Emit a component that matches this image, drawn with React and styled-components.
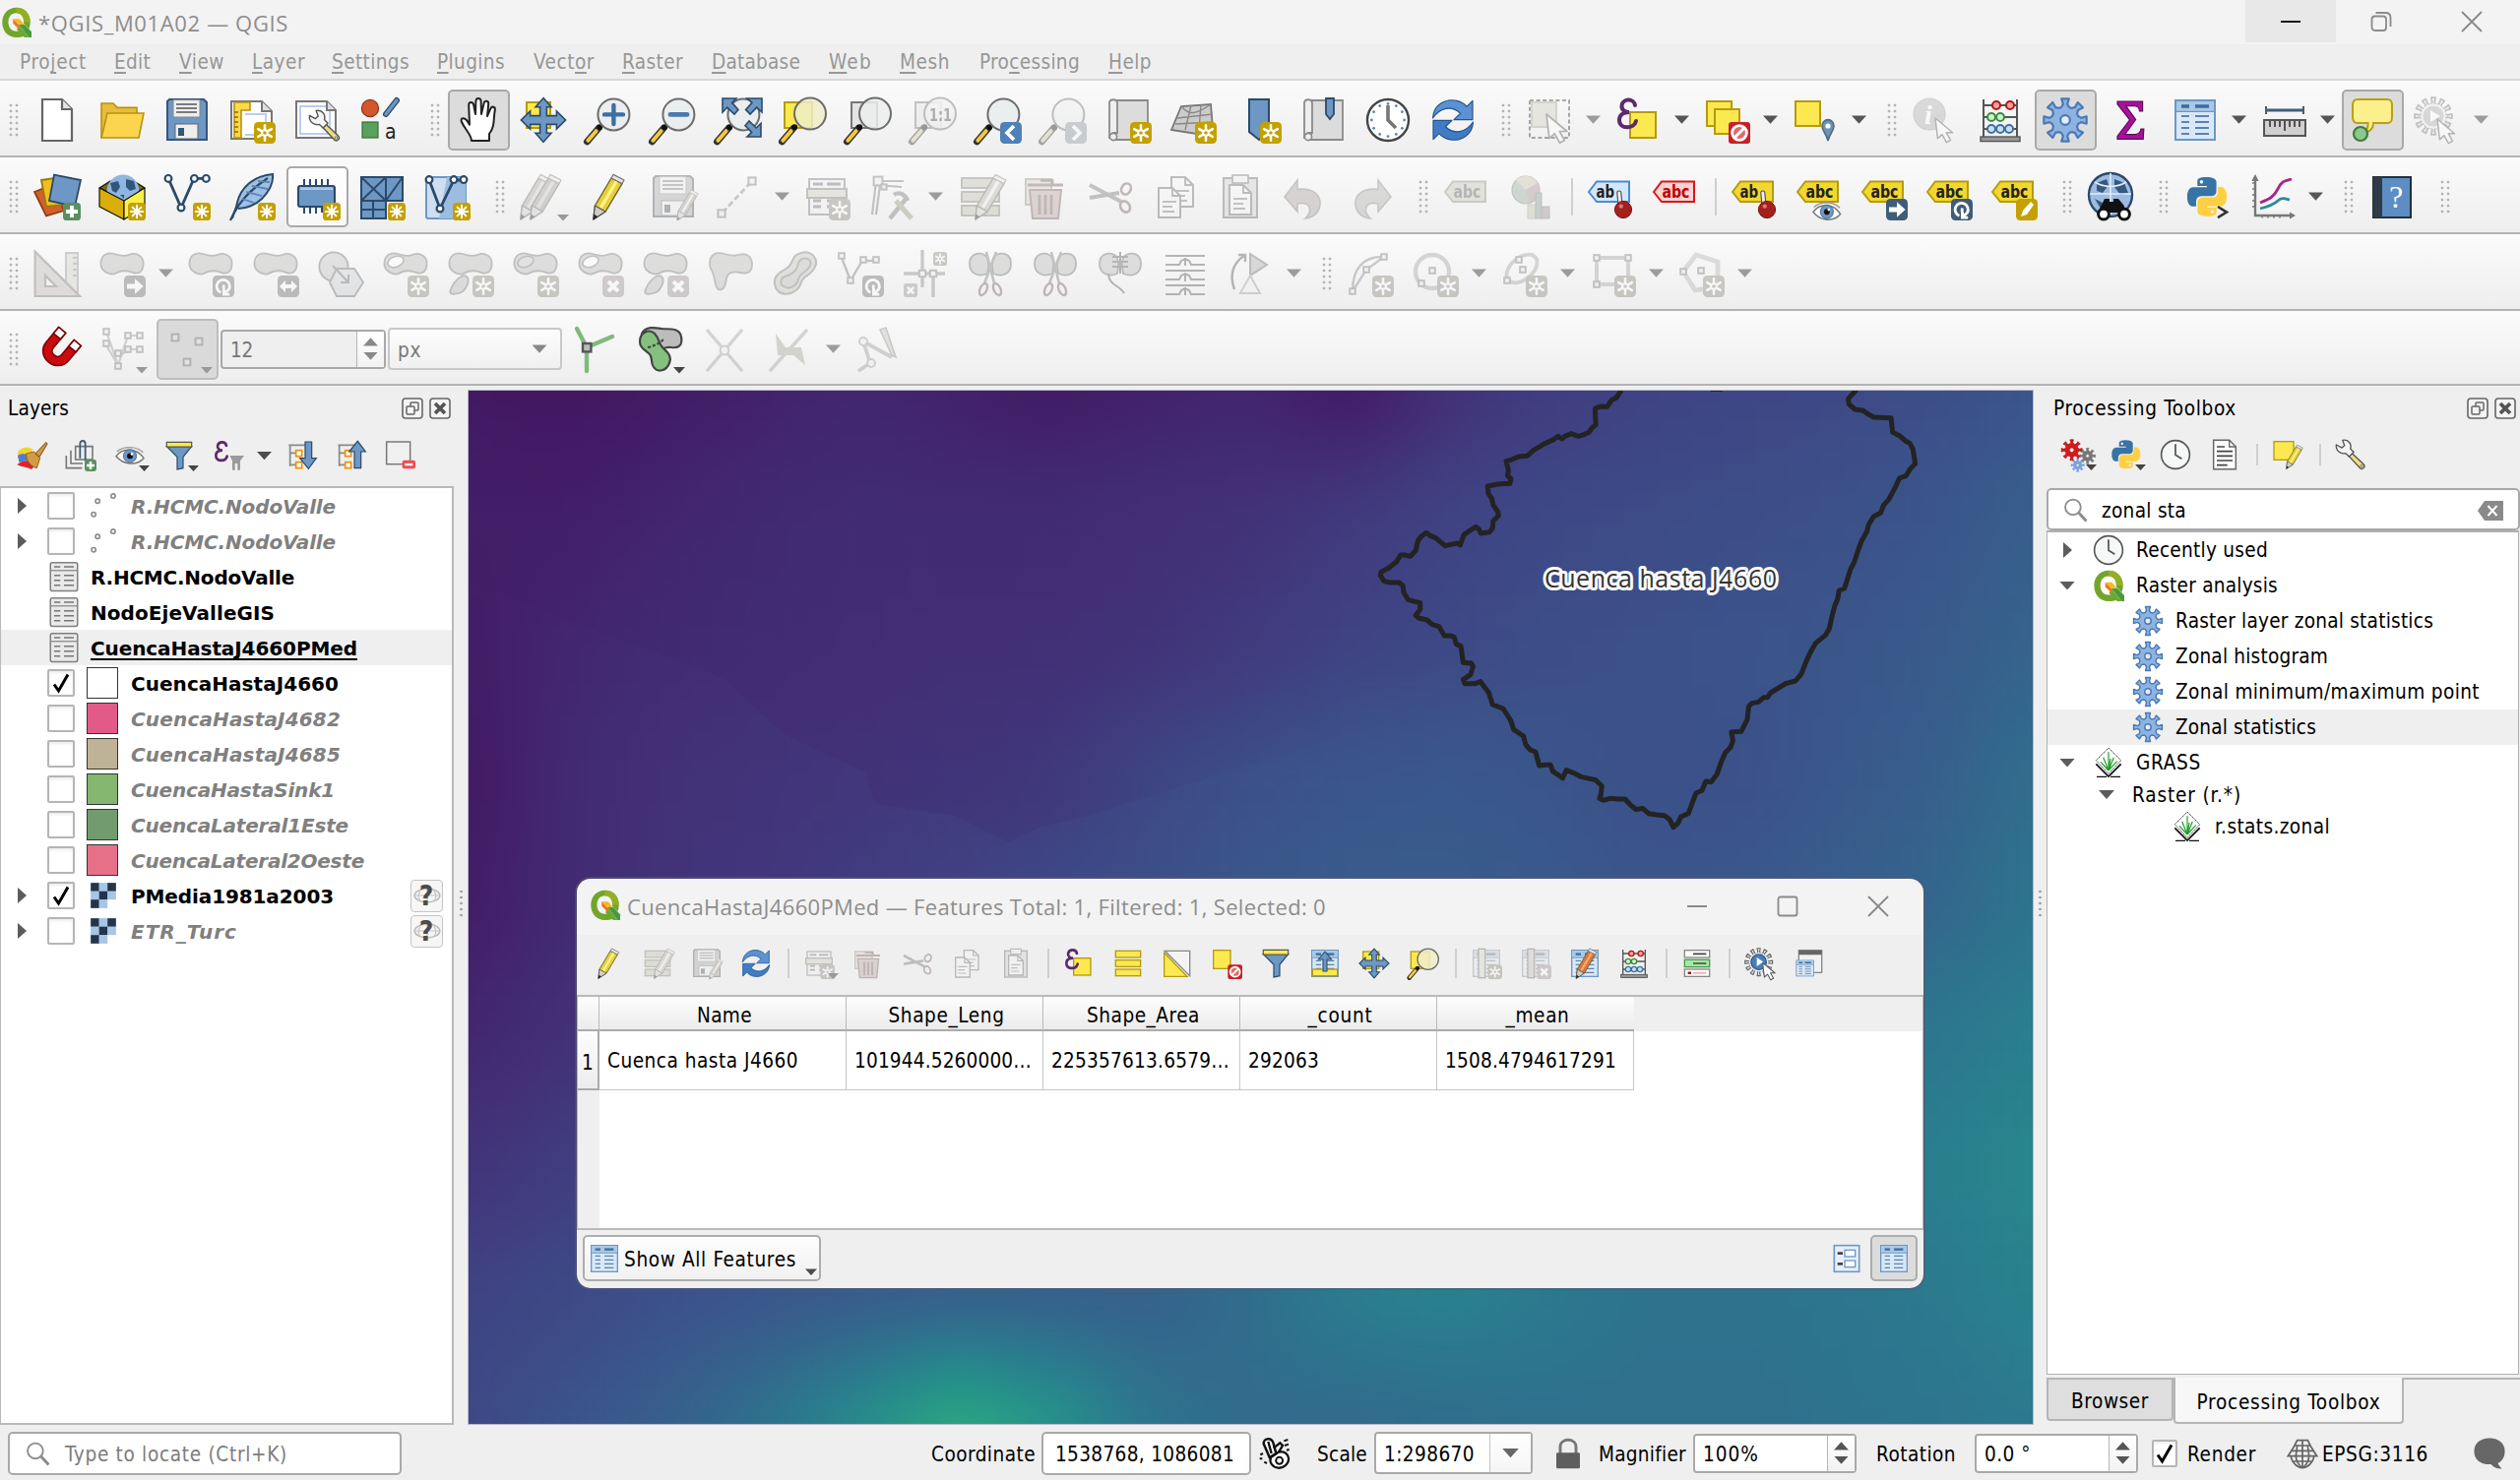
import React, { useLayoutEffect, useRef } from "react";
import styled, { createGlobalStyle, css } from "styled-components";

const UI = `"DejaVu Sans Condensed", "DejaVu Sans", "Noto Sans", sans-serif`;
const SEGOE = `"Open Sans", "Noto Sans", sans-serif`;

const GlobalStyle = createGlobalStyle`
  * { box-sizing: border-box; }
  html, body { margin: 0; padding: 0; }
  body { width: 2560px; height: 1504px; overflow: hidden; background: #efefef;
    font: 20.6px ${UI}; font-stretch: condensed; color: #000; }
`;

/* Text set to a known advance width by distributing letter spacing. */
const FitSpan = styled.span`
  display: inline-block;
  white-space: pre;
  flex: none;
  ${(p) => p.$u && css`text-decoration: underline; text-underline-offset: 3px; text-decoration-thickness: 2px; text-decoration-skip-ink: none;`}
`;
function Fit({ w, u, children }) {
  const ref = useRef(null);
  useLayoutEffect(() => {
    const el = ref.current;
    el.style.letterSpacing = "0px";
    const n = el.textContent.length;
    el.style.letterSpacing = (w - el.getBoundingClientRect().width) / n + "px";
  }, [w]);
  return <FitSpan ref={ref} $u={u}>{children}</FitSpan>;
}

/* ---------- icon parts ---------- */
const BL = "#6d97c4", BD = "#2b4a6b", YE = "#fce94f", YD = "#b59a12", GO = "#c4a000", DK = "#555753";

const star = (cx, cy, r, n, hub, c) => (
  <g stroke="#fff" strokeWidth={r * 0.32} strokeLinecap="round">
    {Array.from({ length: n }, (_, i) => {
      const a = (Math.PI * i) / n + Math.PI / 2;
      const dx = Math.cos(a) * r, dy = Math.sin(a) * r;
      return <path key={i} d={`M${cx - dx} ${cy - dy}L${cx + dx} ${cy + dy}`} />;
    })}
    {hub && <circle cx={cx} cy={cy} r={r * 0.36} fill={c} strokeWidth={r * 0.25} />}
  </g>
);
const B11 = ({ c = GO, x = 13, y = 13, children }) => (
  <g transform={`translate(${x} ${y})`}>
    <rect width="11" height="11" rx="2.2" fill={c} />
    {children || star(5.5, 5.5, 3.9, 3, true, c)}
  </g>
);
const B9 = ({ c = GO, children }) => (
  <g transform="translate(15 15)">
    <rect width="9" height="9" rx="1.8" fill={c} />
    {children || star(4.5, 4.5, 3.1, 4, false, c)}
  </g>
);
const arrowR = <path d="M1.5 4.3h4V1.6l4.3 3.9-4.3 3.9V6.7h-4z" fill="#fff" />;
const rotG = <path d="M4.2 8.600A3.300 3.300 0 1 1 8.300 7L6 9.300M5.600 4.800v1.500c0 1 .6 1.500.6 3.300M8.600 9.600H5.700V6.700" fill="none" stroke="#fff" strokeWidth="1.4" />;
const cross = <path d="M3 3l5 5M8 3l-5 5" stroke="#fff" strokeWidth="2" />;

const blobD = "M1.2 7C1.2 3 4 .8 8 2s5.500 1.200 8 .3 6.800.2 6.800 4.500-2.200 5.800-5.500 4.600-6-1-8.500.4S1.200 11 1.200 7z";
const Blob = () => <path d={blobD} fill="#b4bab0" stroke="#707070" strokeWidth=".9" />;
const Hole = ({ f = "#fff" }) => <ellipse cx="7" cy="6" rx="4.200" ry="2.600" transform="rotate(-20 7 6)" fill={f} stroke="#707070" strokeWidth=".8" />;
const Drop = () => <path d="M2 20C4 15 8 12 10 13.500S10 21 6 22 1 22 2 20z" fill="#b4bab0" stroke="#707070" strokeWidth=".9" />;
const Cursor = ({ x = 0, y = 0, s = 1 }) => (
  <path transform={`translate(${x} ${y}) scale(${s})`} d="M0 0l1.500 13 2.800-2.600 2.800 5 2.600-1.400L7 9.200h4z" fill="#fff" stroke="#555" strokeWidth=".9" strokeLinejoin="round" />
);
const Lens = ({ r = 8, cx = 14.7, cy = 9.2, f = "#e9ecec" }) => (
  <g>
    <path d="M1.200 23L7 16.200" stroke="#333" strokeWidth="3.400" strokeLinecap="round" />
    <path d="M1.700 22.400L5.800 17.600" stroke="#f3c93b" strokeWidth="2" strokeLinecap="round" />
    <circle cx="7.600" cy="15.600" r="1.500" fill="#111" />
    <circle cx={cx} cy={cy} r={r} fill={f} fillOpacity=".85" stroke="#6d6d6d" strokeWidth="1" />
  </g>
);
const pencil = (body = "#e6cf3a", lite = "#fdf38a") => (
  <g strokeLinejoin="round">
    <path d="M5.200 16.500L13.500 2.500 19 5.300 10.600 19.500 4.400 23.500z" fill={body} stroke="#6b6133" strokeWidth=".7" />
    <path d="M8.200 17.500L16.200 4" stroke={lite} strokeWidth="1.700" />
    <path d="M5.200 16.500l5.400 3L4.400 23.500z" fill="#cfcdc8" stroke="#555" strokeWidth=".6" />
    <path d="M4.800 20.800l1.800 1.300-2.300 1.500z" fill="#222" />
    <path d="M13.500 2.500L14.600.7 20 3.500 19 5.300z" fill="#e8e6e2" stroke="#777" strokeWidth=".6" />
  </g>
);
const floppy = (c = "#6d97c4") => (
  <g>
    <path d="M3 1.500h17.500l1.500 1.500v19H2V2.500z" fill={c} stroke="#34567a" strokeWidth="1" />
    <rect x="5" y="1.800" width="13.500" height="8.700" fill="#eee" stroke="#888" strokeWidth=".5" />
    <path d="M6.500 4h10.500M6.500 6h10.500M6.500 8h10.500" stroke="#555" strokeWidth=".8" />
    <rect x="6" y="14" width="11.500" height="7.500" fill="#eee" stroke="#666" strokeWidth=".5" />
    <rect x="7.500" y="16" width="3" height="4" fill="#34567a" />
  </g>
);
const table = (
  <g>
    <rect x="2" y="2" width="20" height="20" fill="#d9e8f6" stroke="#6d97c4" strokeWidth="1" />
    <rect x="2.500" y="2.500" width="19" height="5" fill="#a8c8e8" />
    <path d="M5 5h4M12 5h7" stroke="#3d6c9c" strokeWidth="1.800" />
    <path d="M2 7.700h20" stroke="#6d97c4" strokeWidth=".7" />
    <path d="M5 10h4M12 10h7M5 13h4M12 13h7M5 16h4M12 16h7M5 19h4M12 19h7" stroke="#5c84ad" strokeWidth="1" />
  </g>
);
const gearPath = (cx, cy, r, n) => {
  let d = "";
  for (let i = 0; i < n; i++) {
    const a = (2 * Math.PI * i) / n;
    [[-0.3, 0.62], [-0.13, 0.74], [-0.17, 1], [0.17, 1], [0.13, 0.74], [0.3, 0.62]].forEach(([o, k], j) => {
      const t = a + (o * 8) / n;
      d += `${i || j ? "L" : "M"}${(cx + Math.sin(t) * r * k).toFixed(2)} ${(cy - Math.cos(t) * r * k).toFixed(2)}`;
    });
  }
  return d + "z";
};
const Gear = ({ cx = 12, cy = 12, r = 11, n = 8, f = "#8db3e2", s = "#4b7ab5", w = 1.1, hub = "#fff" }) => (
  <g><path d={gearPath(cx, cy, r, n)} fill={f} stroke={s} strokeWidth={w} strokeLinejoin="round" />
    <circle cx={cx} cy={cy} r={r * 0.22} fill={hub} stroke={s} strokeWidth={w} /></g>
);
const Node = ({ x, y }) => <circle cx={x} cy={y} r="1.700" fill="#fff" stroke={BD} strokeWidth="1.100" />;
const Sq = ({ x, y, r = 1.400 }) => <rect x={x - r} y={y - r} width={2 * r} height={2 * r} fill="#eee" stroke="#777" strokeWidth="1" />;
const label = (t, f, s, tc = "#222") => (
  <g>
    <path d="M1 9.500L5 4.200h16.500v10.300H5z" fill={f} stroke={s} strokeWidth="1" />
    <text x={t === "ab" ? 4.800 : 5.200} y="12.500" fontSize="8.800" fontWeight="bold" fontFamily="DejaVu Sans Condensed" textLength={t === "ab" ? 9.300 : 14} lengthAdjust="spacingAndGlyphs" fill={tc}>{t}</text>
  </g>
);
const pin = <g><path d="M17 16l-.6-6" stroke="#555" strokeWidth="2.600" strokeLinecap="round" /><path d="M17 16l-.6-6" stroke="#eee" strokeWidth="1.400" strokeLinecap="round" /><circle cx="18.500" cy="18.500" r="4.300" fill="#a3201f" stroke="#771515" strokeWidth=".5" /><circle cx="17.400" cy="16.800" r="1.100" fill="#e57373" /></g>;
const arrows4 = (
  <path d="M12 .8l4 4.600h-2.300v4.400h5V7.500L23.300 12l-4.600 4.500v-2.300h-5v4.400H16L12 23.200 8 18.600h2.300v-4.400H5.300v2.300L.7 12l4.600-4.500v2.300h5V5.400H8z" fill={BL} stroke={BD} strokeWidth=".8" />
);
const python = (x = 0, y = 0, s = 1) => (
  <g transform={`translate(${x} ${y}) scale(${s})`}>
    <path fill="#3773a5" d="M14.25.18l.9.2.73.26.59.3.45.32.34.34.25.34.16.33.1.3.04.26.02.2-.01.13V8.500l-.05.63-.13.55-.21.46-.26.38-.3.31-.33.25-.35.19-.35.14-.33.1-.3.07-.26.04-.21.02H8.770l-.69.05-.59.14-.5.22-.41.27-.33.32-.27.35-.2.36-.15.37-.1.35-.07.32-.04.27-.02.21v3.060H3.170l-.21-.03-.28-.07-.32-.12-.35-.18-.36-.26-.36-.36-.35-.46-.32-.59-.28-.73-.21-.88-.14-1.050-.05-1.230.06-1.220.16-1.040.24-.87.32-.71.36-.57.4-.44.42-.33.42-.24.4-.16.36-.1.32-.05.24-.01h.16l.06.01h8.160v-.83H6.180l-.01-2.750-.02-.37.05-.34.11-.31.17-.28.25-.26.31-.23.38-.2.44-.18.51-.15.58-.12.64-.1.71-.06.77-.04.84-.02 1.270.05zm-6.300 1.980l-.23.33-.08.41.08.41.23.34.33.22.41.09.41-.09.33-.22.23-.34.08-.41-.08-.41-.23-.33-.33-.22-.41-.09-.41.09z" />
    <path fill="#ffcf42" d="M21.100 6.110l.28.06.32.12.35.18.36.27.36.35.35.47.32.59.28.73.21.88.14 1.040.05 1.230-.06 1.230-.16 1.040-.24.86-.32.71-.36.57-.4.45-.42.33-.42.24-.4.16-.36.09-.32.05-.24.02-.16-.01h-8.220v.82h5.840l.01 2.760.02.36-.05.34-.11.31-.17.29-.25.25-.31.24-.38.2-.44.17-.51.15-.58.13-.64.09-.71.07-.77.04-.84.01-1.270-.04-1.070-.14-.9-.2-.73-.25-.59-.3-.45-.33-.34-.34-.25-.34-.16-.33-.1-.3-.04-.25-.02-.2.01-.13v-5.340l.05-.64.13-.54.21-.46.26-.38.3-.32.33-.24.35-.2.35-.14.33-.1.3-.06.26-.04.21-.02.13-.01h5.840l.69-.05.59-.14.5-.21.41-.28.33-.32.27-.35.2-.36.15-.36.1-.35.07-.32.04-.28.02-.21V6.070h2.090l.14.01zm-6.470 14.250l-.23.33-.08.41.08.41.23.33.33.23.41.08.41-.08.33-.23.23-.33.08-.41-.08-.41-.23-.33-.33-.23-.41-.08-.41.08z" />
  </g>
);
const eye = (
  <g>
    <path d="M1.500 12.500C6 6 17 5.500 22.500 14 17 20 7 19 1.500 12.500z" fill="#fff" stroke="#777" strokeWidth="1.100" />
    <path d="M2 9C7 4.500 17 4.500 22 9.500" fill="none" stroke="#999" strokeWidth="1" />
    <circle cx="12" cy="12.300" r="5" fill="#6d97c4" stroke="#3b618d" strokeWidth=".6" /><circle cx="12" cy="12.300" r="2.200" fill="#111" /><circle cx="13.500" cy="10.800" r="1" fill="#fff" />
  </g>
);
const funnel = <g><path d="M2.500 5h19L15 13v8.500l-4.500 1V13z" fill={BL} stroke={BD} strokeWidth=".9" /><path d="M2.500 1.800h19v3.600h-19z" fill={YE} stroke={DK} strokeWidth=".9" /></g>;
const clock = (w = 1) => (
  <g><circle cx="12" cy="12" r="10.800" fill="#f6f7f7" stroke="#555" strokeWidth={w} /><path d="M12 4v8.200l4.800 3" fill="none" stroke="#555" strokeWidth="1.300" /></g>
);
const refresh = (
  <g stroke="#24548f" strokeWidth=".6" strokeLinejoin="round">
    <path d="M1.800 11C2 4.500 8 .8 14 2.200c2 .5 3.800 1.500 5 3L22 2.200v9.600h-9.500l3.300-3.200C11.500 4.500 5.500 5.500 1.800 11z" fill="#5c92d2" />
    <path d="M22.200 13C22 19.500 16 23.200 10 21.800c-2-.5-3.800-1.500-5-3L2 21.800v-9.600h9.500l-3.300 3.200c4.300 4.100 10.300 3.100 14-2.400z" fill="#3f7cc4" />
  </g>
);
const abacus = (
  <g>
    <path d="M3.500 1.500v19M20.500 1.500v19M3 4.500h18M3 10.500h18M3 16.500h18" stroke="#555" strokeWidth="1" />
    {[[10, 4.500], [17, 4.500]].map(([x, y]) => <circle key={x} cx={x} cy={y} r="2" fill="#f7a1a1" stroke="#b21616" strokeWidth="1" />)}
    {[[7.500, 10.500], [12, 10.500]].map(([x, y]) => <circle key={x} cx={x} cy={y} r="2" fill="#ccf2cc" stroke="#3f8a3f" strokeWidth="1" />)}
    {[[7.500, 16.500], [12, 16.500], [16.500, 16.500]].map(([x, y]) => <circle key={x} cx={x} cy={y} r="2" fill="#cbe0f5" stroke="#3f6f9f" strokeWidth="1" />)}
    <rect x="2" y="20.500" width="20" height="2.300" fill="#999" stroke="#555" strokeWidth=".7" />
  </g>
);
const rowsY = (c = YE, s = YD) => [2.500, 9.500, 16.500].map((y) => <rect key={y} x="2.500" y={y} width="19" height="5" fill={c} stroke={s} strokeWidth="1" />);
const scissors = (
  <g fill="none" stroke="#777" strokeWidth="1.300">
    <path d="M1.500 6l16 8.500M1.500 12.500l15-2.500" strokeWidth="2" />
    <ellipse cx="20" cy="8" rx="2.300" ry="2.900" transform="rotate(30 20 8)" stroke="#a05050" /><ellipse cx="19.500" cy="17" rx="2.300" ry="3" transform="rotate(-30 19.500 17)" stroke="#a05050" />
  </g>
);
const docL = (x, y) => <g transform={`translate(${x} ${y})`}><path d="M0 0h7l4 4v11H0z" fill="#f6f6f6" stroke="#666" strokeWidth="1" /><path d="M7 0v4h4" fill="none" stroke="#666" strokeWidth=".9" /><path d="M2 7h7M2 9.500h5M2 12h6" stroke="#777" strokeWidth=".9" /></g>;
const split = (
  <g><path d="M1.500 7C1.500 2 6 1 9 2.500c3 1.500 2 7 1.500 9.500C6 14 1.500 12 1.500 7zM22.500 7c0-5-4-6-7.500-4.500-3 1.500-2 7-1.500 9.500 5 2 9 0 9-5z" fill="#b4bab0" stroke="#666" strokeWidth=".9" />
    <path d="M10 1l4 16M15 1L9 17" stroke="#777" strokeWidth="1.300" /><ellipse cx="8.500" cy="20" rx="1.700" ry="3.200" transform="rotate(25 8.500 20)" fill="none" stroke="#a05050" strokeWidth="1.200" /><ellipse cx="15.500" cy="20" rx="1.700" ry="3.200" transform="rotate(-25 15.500 20)" fill="none" stroke="#a05050" strokeWidth="1.200" /></g>
);
const trash = <g><rect x="2" y="3" width="13" height="13" fill="#e0d0b0" stroke="#a09070" strokeWidth="1" /><path d="M4 8.500h16L18.500 23h-13z" fill="#df9a9a" stroke="#a05050" strokeWidth="1" /><path d="M3 6h18M9.500 3.700h6V6M9 11v10M12 11v10M15 11v10" stroke="#a05050" strokeWidth="1.400" fill="none" /></g>;
const scroll = <g><path d="M5 2h17v20H6z" fill="#dcdcdc" stroke="#8a8a8a" strokeWidth=".9" /><path d="M2.500 3.500C2.500 1 6.500 1 6.500 3.500v15H5c-1.500 0-2.500 1.500-2.500 3z" fill="#eee" stroke="#8a8a8a" strokeWidth=".9" /><circle cx="4.500" cy="20.500" r="1.800" fill="#eee" stroke="#8a8a8a" strokeWidth=".8" /></g>;
const epsilon = <path d="M10.500 4.500C10 1 4.500.8 3.800 4.500c-.4 2.300 1.700 3.500 3.700 3.500-3 0-5 1.300-5 4 0 4.800 7.500 4.800 8.500.5" fill="none" stroke="#5b2a6b" strokeWidth="2" strokeLinecap="round" />;
const noBadge = <g transform="translate(13 13)"><rect width="11" height="11" rx="1.500" fill="#c92026" /><circle cx="5.500" cy="5.500" r="3.700" fill="#dd6b6b" stroke="#fff" strokeWidth="1.400" /><path d="M3 8l5-5" stroke="#fff" strokeWidth="1.500" /></g>;
const treeStub = <g><path d="M2.500 4H20M3.500 4v16M3.500 10h5M3.500 19h5" stroke="#8a8a8a" strokeWidth="1.300" fill="none" /><rect x="8" y="8" width="4.500" height="4.500" fill="#fff" stroke="#f29100" strokeWidth="1.300" /><rect x="8" y="17" width="4.500" height="4.500" fill="#fff" stroke="#f29100" strokeWidth="1.300" /></g>;
const wrench = (
  <g strokeLinejoin="round">
    <path d="M12.500 10.500l9.500 9c1.500 2-1 4.300-2.800 2.800L10.500 13z" fill="#f0dc82" stroke="#555" strokeWidth="1" />
    <circle cx="20.300" cy="20.700" r=".9" fill="#fff" stroke="#555" strokeWidth=".6" />
    <path d="M1 4.500l4.300 2.300 2-1.800L5.800 1c4-.8 7.200 2.500 6 6.500l2.500 2.600-3.500 3.400-2.600-2.500C4.300 12 .5 9 1 4.500z" fill="#f4f4f4" stroke="#555" strokeWidth="1" />
  </g>
);

const I = {
  new: <g><path d="M4.500 1.500h10l5 5v16h-15z" fill="#fff" stroke="#666" strokeWidth="1.100" /><path d="M14.500 1.500v5h5" fill="#e4e4e4" stroke="#666" strokeWidth="1.100" /></g>,
  open: <g stroke="#b8930f" strokeWidth=".8"><path d="M1.500 21V3.500h6l2 2.200h10V10" fill="#e9bc3c" /><path d="M1.500 21L4.500 8.500h18.500l-2.500 12.500z" fill="#fcd54e" /></g>,
  save: floppy(),
  layout: <g><path d="M1.500 2.500H17l5 5v14H1.500z" fill="#fff" stroke="#777" /><path d="M3 3h8v4H6.500v14H3z" fill="#fcd94a" stroke="#b8930f" strokeWidth=".8" /><path d="M3 8h2M3 10.500h2M3 13h2M3 15.500h2M3 18h2" stroke="#8a6d00" strokeWidth=".7" /><path d="M8.500 9H19v10.500H8.500" fill="none" stroke="#b9cdf2" /><path d="M17 2.500v5h5" fill="#ddd" stroke="#777" /><B11 /></g>,
  layoutMgr: <g><path d="M1.500 2.500H17l4.500 4.500v14H1.500z" fill="#fff" stroke="#777" /><rect x="3.500" y="5" width="15" height="14" fill="none" stroke="#b9cdf2" /><path d="M17 2.500V7h4.500" fill="#ddd" stroke="#777" /><g transform="translate(7.500 6.500) scale(.7)">{wrench}</g></g>,
  style: <g><circle cx="6" cy="6" r="4.300" fill="#d2572c" stroke="#8f3515" strokeWidth=".6" /><path d="M14 9l5.500-7" stroke={BD} strokeWidth="3" strokeLinecap="round" /><path d="M14 9l5.500-7" stroke={BL} strokeWidth="1.700" strokeLinecap="round" /><rect x="2" y="13" width="8" height="8" fill="#5aa05c" stroke="#38703a" strokeWidth=".6" /><text x="13.500" y="21.500" fontSize="10.500" fontFamily="DejaVu Sans Condensed" fill="#222">a</text></g>,
  hand: <path d="M8.500 22.500c0-3-3.500-6-5-9.500-1-2.300 1.500-2.700 3-.3l1 1.600L7.100 4.500c-.1-2 2.200-2 2.500-.1L10.500 9 10.700 2.500c.1-2 2.500-2 2.600 0L13.500 9l1.300-5.500c.4-1.700 2.500-1.400 2.300.4L16.500 10l1.700-3.800c.7-1.500 2.500-.9 2.200.7C19.500 12 20.500 15 17.500 19v3.500z" fill="#fff" stroke="#222" strokeWidth="1" strokeLinejoin="round" />,
  panSel: <g><rect x="3.500" y="3" width="12" height="13" fill={YE} stroke={YD} />{arrows4}</g>,
  zoomIn: <g><Lens /><path d="M14.700 4.500v9.500M10 9.200h9.500" stroke="#3d6ea5" strokeWidth="2.200" strokeLinecap="round" /></g>,
  zoomOut: <g><Lens /><path d="M10.500 9.200h8.500" stroke="#4a7ab0" strokeWidth="2.400" strokeLinecap="round" /></g>,
  zoomFull: <g><Lens /><g fill={BL} stroke={BD} strokeWidth=".8"><path d="M4 1h7L8.800 3.200l3.200 3.500L10 9 6.400 5.600 4 8z" /><path d="M24 1h-7.500l2.500 2.200-3.200 3.500L18 9l3.400-3.400L24 8z" /><path d="M23.500 20.500h-7l2.300-2.300-3.300-3.400 2-2.300 3.600 3.500 2.400-2.300z" /></g></g>,
  zoomSel: <g><rect x="2.500" y="3" width="14" height="13" fill={YE} stroke={YD} /><Lens f="#efedc8" cx={15.500} cy={8.800} /></g>,
  zoomLayer: <g><rect x="3.500" y="3" width="13" height="13" fill="#e4e4e4" stroke="#777" /><Lens cx={15.500} cy={8.800} f="#eceeee" /></g>,
  zoomNative: <g><rect x="3" y="3" width="13" height="13" fill="#e4e4e4" stroke="#777" /><Lens cx={15.500} cy={8.800} /><text x="10" y="12.500" fontSize="9" fontWeight="bold" fontFamily="DejaVu Sans Condensed" textLength="11.500" lengthAdjust="spacingAndGlyphs" fill="#444">1:1</text></g>,
  zoomLast: <g><Lens /><B11 c="#4f80b8"><path d="M7 2L3.500 5.500 7 9" fill="none" stroke="#fff" strokeWidth="1.800" /></B11></g>,
  zoomNext: <g><Lens /><B11 c="#7f96ac"><path d="M4 2l3.500 3.500L4 9" fill="none" stroke="#fff" strokeWidth="1.800" /></B11></g>,
  newMap: <g>{scroll}<B11 /></g>,
  new3d: <g><path d="M1 17L6 5l15-1 1 12-8 3z" fill="#ccc" stroke="#777" strokeWidth=".9" /><path d="M4 11l18-2M3 14l19-1M11 4.500L8 17M16 4.300L15 17M6 5c4 5 8 4 15-1" stroke="#888" strokeWidth=".7" fill="none" /><B11 /></g>,
  bookNew: <g><path d="M7.500 1.500h10V18l-5 4-5-4z" fill={BL} stroke={BD} strokeWidth="1" /><B11 /></g>,
  bookShow: <g>{scroll}<path d="M13.500 1h4v8l-2 2.500-2-2.500z" fill={BL} stroke={BD} strokeWidth=".9" /></g>,
  temporal: <g><circle cx="12" cy="12" r="10.500" fill="#fff" stroke="#444" strokeWidth="1.200" />{Array.from({ length: 12 }, (_, i) => <circle key={i} cx={12 + 8.300 * Math.sin(i * 0.5236)} cy={12 - 8.300 * Math.cos(i * 0.5236)} r=".7" fill="#5b86b5" />)}<path d="M12 4.500V12l4 4" fill="none" stroke="#777" strokeWidth="1.800" /></g>,
  refresh,
  select: <g><rect x="2" y="2" width="20" height="19" fill="none" stroke="#333" strokeWidth="1" strokeDasharray="2 1.300" /><rect x="3" y="3" width="12.500" height="12.500" fill="#d5cfa0" stroke="#aaa27a" /><Cursor x={10.500} y={9} s={0.95} /></g>,
  selExpr: <g><rect x="8" y="8" width="13" height="13" fill={YE} stroke={YD} />{epsilon}</g>,
  deselect: <g><rect x="2" y="2.500" width="12.500" height="12.500" fill={YE} stroke={YD} /><rect x="6" y="6.500" width="12.500" height="12.500" fill={YE} stroke={YD} />{noBadge}</g>,
  selLoc: <g><rect x="2" y="2.500" width="12.500" height="12.500" fill={YE} stroke={YD} /><path d="M18.500 22.500c-1-4-3-5-3-7.500a3 3.200 0 0 1 6 0c0 2.500-2 3.500-3 7.500z" fill="#6f93b0" stroke="#4c6b85" strokeWidth=".8" /><circle cx="18.500" cy="15" r="1.300" fill="#fff" /></g>,
  identify: <g><circle cx="9" cy="9" r="8" fill="#a9afb4" stroke="#999" strokeWidth=".6" /><text x="6.500" y="14" fontSize="14" fontStyle="italic" fontWeight="bold" fontFamily="Liberation Serif" fill="#fff">i</text><Cursor x={12} y={11} s={0.8} /></g>,
  abacus,
  gear: <Gear hub="#e6ecf4" />,
  sigma: <path d="M5.500 2.500h12.800v5h-1.500c-.3-2-1-2.700-3-2.700h-4l5 7-5.500 7.500h5c2 0 2.800-.8 3.200-2.800h1.400l-.3 5.200H5.500v-1.500l6.300-8.300-6.300-8z" fill="#a8109c" stroke="#5c0a56" strokeWidth=".6" />,
  table,
  measure: <g><path d="M3 7h19" stroke="#3f5d7a" strokeWidth="1.600" /><path d="M3 5v4M22 5v4" stroke="#3f5d7a" strokeWidth="1" /><rect x="2" y="12" width="21" height="8" fill="#d0d0d0" stroke="#555" strokeWidth="1" /><path d="M5 12.500v3M7.500 12.500v3M10 12.500v3M12.500 12.500v5M15 12.500v3M17.500 12.500v3M20 12.500v3" stroke="#333" strokeWidth=".8" /></g>,
  tips: <g><path d="M10.500 12.500C11 15 9 17 6.500 18.500" fill="none" stroke="#c4a000" strokeWidth="1.300" /><path d="M4.500 1.500h15c2 0 2.500 1 2.500 3v6c0 2-.5 3-2.500 3h-7c0 2-1 4-4 5 1-2 1.500-3 1.300-5H4.500c-2 0-2.500-1-2.500-3v-6c0-2 .5-3 2.500-3z" fill="#fbf08d" stroke="#b8a010" strokeWidth="1" /><circle cx="6" cy="19" r="3.500" fill="#8bc88b" stroke="#3f7a3f" strokeWidth="1.100" /></g>,
  action: <g><Gear cx={10} cy={10} r={9.500} n={12} f="#f0f0f0" s="#777" w={0.9} hub="#fff" /><circle cx="10" cy="10" r="6.300" fill="#f0f0f0" /><circle cx="10" cy="10" r="5.300" fill="#a5acb4" /><path d="M8.500 7l5 3-5 3z" fill="#fff" /><Cursor x={12} y={11.500} s={0.8} /></g>,
  actionBlue: <g><Gear cx={11} cy={11} r={10.500} n={12} f="#ececec" s="#666" w={0.9} hub="#fff" /><circle cx="11" cy="11" r="7.300" fill="#ececec" /><circle cx="11" cy="11" r="5.800" fill="#4a7fb8" stroke="#2c5c90" /><path d="M9.500 7.500l5 3.400-5 3.400z" fill="#fff" /><Cursor x={14} y={11.500} s={0.85} /></g>,

  dsm: <g strokeWidth=".9"><path d="M.5 9.500l9-3.500 6 13-9 2.700z" fill="#d2602c" stroke="#8f3f15" /><path d="M4 3.500l10-1.500 2 14-9.500 1z" fill="#f0bf1c" stroke="#9a7a08" /><path d="M10.500.8L24 3.500 21 17 8 14z" fill={BL} stroke={BD} /><B9 c="#5a9060"><path d="M4.500 1.500v6M1.500 4.500h6" stroke="#fff" strokeWidth="1.900" /></B9></g>,
  gpkg: <g strokeLinejoin="round"><path d="M.5 7.500L6 4h12l5.500 3.500L13 13z" fill="#7a6a10" stroke="#111" strokeWidth=".6" /><circle cx="12.500" cy="9" r="8.200" fill="#8fb6e0" /><path d="M6 5l4-1 1 3-2 3-2-1zM14 3l4 1 1 4-3 1-2-2zM11 11l2 0 0 2z" fill="#33557c" /><path d="M.5 7.500L13 14v9.500L.5 17z" fill="#d9ae08" stroke="#111" strokeWidth=".6" /><path d="M23.500 7.500L13 14v9.500l10.500-6.500z" fill="#fbf04a" stroke="#111" strokeWidth=".6" /><B9 /></g>,
  shp: <g><path d="M2.500 2.700L9 17.500l6.500-14.800h6" fill="none" stroke={BD} strokeWidth="1.400" /><Node x={2.500} y={2.700} /><Node x={9} y={17.500} /><Node x={15.700} y={2.700} /><Node x={21.700} y={2.700} /><B9 /></g>,
  spatialite: <g><path d="M2 23c1-4 2-5 2.500-8C6 8 12 1.500 22.500.5 23 5 21 9 17 13c-3 3-8 5-12 5" fill="#9cc0e6" stroke={BD} strokeWidth="1" /><path d="M1 24C4 17 10 9 20 2.500" fill="none" stroke={BD} strokeWidth="1.100" /><path d="M9 9.500l8 2M12 6.500l8 1.500M7 13l6 2M15 4l6 .6" stroke="#5c84b0" strokeWidth=".9" /><B9 /></g>,
  mem: <g><path d="M5.500 3v4M8.500 3v4M11.500 3v4M14.500 3v4M17.500 3v4M5.500 17v3.500M8.500 17v3.500M11.500 17v3.500M14.500 17v3" stroke={BD} strokeWidth="1" /><rect x="2.500" y="6.500" width="18.500" height="10.500" rx="1" fill={BL} stroke={BD} strokeWidth="1" /><path d="M3.500 7.800h16.500" stroke="#a9c6e6" strokeWidth="1.300" /><B9 /></g>,
  mesh: <g fill={BL} stroke={BD} strokeWidth="1"><rect x="1.500" y="2" width="12.500" height="12" /><path d="M1.500 2L14 14M14 2L1.500 14" /><rect x="14" y="2" width="8.500" height="12" /><path d="M22.500 2L14 14" /><rect x="1.500" y="14" width="12.500" height="9" /><path d="M1.500 18.500H14M7.500 14v9" /><g stroke="none"><B9 /></g></g>,
  virtual: <g><rect x="1.500" y="2" width="20" height="21" rx="1" fill="#cfdff0" stroke={BL} strokeWidth="1" /><path d="M12 2h9.500v21H8z" fill="#9dbde0" /><path d="M3 3.500L8.500 18l7-14.500h5" fill="none" stroke={BD} strokeWidth="1.400" /><Node x={3} y={3.300} /><Node x={8.500} y={18} /><Node x={15.500} y={3.300} /><Node x={20.500} y={3.300} /><B9 /></g>,

  edits: <g><g transform="translate(-4 0)">{pencil("#b89f92", "#d8ccc6")}</g><g transform="translate(1 0)">{pencil("#a89890", "#d0c6c0")}</g></g>,
  pencil: pencil(),
  saveEdits: <g>{floppy("#a9a9a9")}<g transform="translate(11 8) scale(.68)">{pencil("#c09a80", "#eee")}</g></g>,
  digitize: <g><path d="M4 20L19 4" stroke="#888" strokeWidth="1.400" strokeDasharray="3 1.500" /><Sq x={3.500} y={20.500} r={1.800} /><Sq x={19} y={4} r={1.800} /></g>,
  addRow: <g><rect x="3" y="3" width="18" height="18" fill="#f0f0f0" stroke="#777" /><path d="M5 5.500h5M12 5.500h7M5 14h4M12 14h7M5 17h4M12 17h7" stroke="#667" strokeWidth="1.400" /><rect x="2" y="8" width="20" height="4.500" fill="#d6ce9c" stroke="#777" /><B11 c="#8f875f" /></g>,
  vertex: <g><path d="M4 4l14 0M4 6l13 1M4 4L2 21M6 6L4 21" stroke="#777" strokeWidth="1.100" /><Sq x={5} y={4} r={2.200} /><Sq x={8} y={7} r={1.300} /><path d="M11 23l9-11M13 11c3-2 6 0 7 3" stroke="#777" strokeWidth="2.200" fill="none" /><path d="M14 14l8 9" stroke="#a09850" strokeWidth="2.600" /></g>,
  modAttr: <g>{rowsY("#c6c092", "#868158")}<g transform="translate(5 0)">{pencil("#c6ae9c", "#eee")}</g></g>,
  trash, scissors,
  copy: <g>{docL(10, 2)}{docL(3.500, 7.500)}</g>,
  paste: <g><rect x="3.500" y="2.500" width="17" height="20" fill="#d0d0c6" stroke="#666" /><rect x="8" y="1" width="8" height="4" fill="#eee" stroke="#666" strokeWidth=".8" />{docL(6.500, 6)}</g>,
  undo: <path d="M1.500 12L8 3.500v4.700c8-1 12 3 11.500 8-.6 4-3.500 6.300-7.500 6.800 3.500-3 3.500-9-4-7.500v4z" fill="#bd9c96" stroke="#8c7a78" strokeWidth=".8" />,
  redo: <path d="M22.500 12L16 3.500v4.700c-8-1-12 3-11.500 8 .6 4 3.500 6.300 7.500 6.800-3.500-3-3.500-9 4-7.500v4z" fill="#a8b6a4" stroke="#7b887a" strokeWidth=".8" />,
  lblDis: label("abc", "#cbc59c", "#8f8a66", "#555"),
  diagram: <g><circle cx="9" cy="8.500" r="7" fill="#7cb48a" stroke="#777" strokeWidth=".6" /><path d="M9 8.500L4 3.500A7 7 0 0 1 15 5z" fill="#cfc470" /><path d="M9 8.500L15 5a7 7 0 0 1-4 10z" fill="#d48080" /><rect x="10" y="16" width="4" height="7" fill="#cfc470" stroke="#999" strokeWidth=".5" /><rect x="14" y="10" width="3" height="13" fill="#70a490" stroke="#777" strokeWidth=".5" /><rect x="17" y="17" width="4" height="6" fill="#b88" stroke="#777" strokeWidth=".5" /></g>,
  lblPin: <g>{label("ab", "#d3e7fc", "#4a8bd0")}{pin}</g>,
  lblRed: label("abc", "#fbd2d2", "#d41818", "#c00000"),
  lblYPin: <g>{label("ab", "#f2d82e", "#b59a12")}{pin}</g>,
  lblEye: <g>{label("abc", "#f2d82e", "#b59a12")}<g transform="translate(8 11) scale(.66 .7)">{eye}</g></g>,
  lblMove: <g>{label("abc", "#f2d82e", "#b59a12")}<B11 c="#3f5d78">{arrowR}</B11></g>,
  lblRot: <g>{label("abc", "#f2d82e", "#b59a12")}<B11 c="#3f5d78">{rotG}</B11></g>,
  lblEdit: <g>{label("abc", "#f2d82e", "#b59a12")}<B11 c={GO}><path d="M2.500 9l1-3 4-4.500 1.500 1.500L5.500 8z" fill="#fff" /></B11></g>,
  metasearch: <g><circle cx="12" cy="11" r="11" fill="#9cbbe0" stroke={BD} strokeWidth="1.200" /><path d="M5 5l5-2 1 3-3 4-3-1zM14 3l5 2 2 5-4 1-3-4zM4 13l4 2-1 3z" fill="#35587f" /><path d="M1.500 10.500h21M12 0v21M4 4.500c5 3 11 3 16 0" stroke="#e0ecf8" strokeWidth=".8" fill="none" /><path d="M9 13h2.500v1.500h2V13H16l2.500 3 2 4H5.500l2-4z" fill="#111" /><circle cx="8.500" cy="20.800" r="2.700" fill="#fff" stroke="#111" strokeWidth="1.500" /><circle cx="19" cy="20.800" r="2.700" fill="#fff" stroke="#111" strokeWidth="1.500" /></g>,
  python: <g>{python(2, 2, 0.83)}<path d="M17.500 17l4.500 2.800-4.500 2.800" fill="none" stroke="#333" strokeWidth="1.300" /></g>,
  chart: <g><path d="M6 3l15 0v16H6z" fill="#f7f7f7" /><path d="M3.500 2v19.500H22" stroke="#777" strokeWidth="1.200" fill="none" /><path d="M1.700 4l1.800-3.500L5.300 4zM21 19.700l3 1.800-3 1.800z" fill="#777" /><path d="M6 15c5-2 7-3 9-7s3-4 7-5" stroke="#a8258f" strokeWidth="1.400" fill="none" /><path d="M6 18c4-1 7-2 9-4s4-1 6-.5" stroke="#2a8c96" strokeWidth="1.400" fill="none" /><path d="M2 5h1.500M2 8h1.500M2 11h1.500M2 14h1.500M2 17h1.500M7 21.500v1.300M10 21.500v1.300M13 21.500v1.300M16 21.500v1.300" stroke="#777" strokeWidth=".8" /></g>,
  help: <g><rect x="2.500" y="2" width="19" height="20.500" fill="#5d8dc2" stroke="#222f3c" strokeWidth="1" /><rect x="2.500" y="2" width="4.500" height="20.500" fill="#2e3b48" /><text x="10.500" y="17.500" fontSize="16" fontFamily="Liberation Serif" fill="#fff">?</text></g>,

  cad: <g strokeWidth=".9"><rect x="16.500" y="1.500" width="6" height="20" fill="#d6d2b0" stroke="#888" /><path d="M20 4h2M20 7h2M20 10h2M20 13h2" stroke="#888" /><path fillRule="evenodd" d="M.8.800l22.700 22.700H.8zM6 13v5.500h5.500z" fill="#ccb8ac" stroke="#7b7370" strokeWidth="1.100" /></g>,
  fMove: <g><Blob /><B11 c="#6a6a6a">{arrowR}</B11></g>,
  fRot: <g><Blob /><B11 c="#6a6a6a">{rotG}</B11></g>,
  fScale: <g><Blob /><B11 c="#6a6a6a"><path d="M1 5.500L4 2.500v2h3v-2l3 3-3 3v-2H4v2z" fill="#fff" /></B11></g>,
  simplify: <g fill="#bcc2be" stroke="#666" strokeWidth=".9"><circle cx="8.500" cy="8.500" r="7.300" /><path d="M10 9.500h9l4.500 7-4.500 7h-9l-3.500-7z" fill="#c6d0da" /><path d="M8 8l8 8.500M16 12.500v4h-4" fill="none" strokeWidth="1" /></g>,
  addRing: <g><Blob /><Hole /><B11 c="#8f875f" /></g>,
  addPart: <g><Blob /><Drop /><B11 c="#8f875f" /></g>,
  fillRing: <g><Blob /><Hole f="#c0c6bc" /><B11 c="#8f875f" /></g>,
  delRing: <g><Blob /><Hole /><B11 c="#b0888e">{cross}</B11></g>,
  delPart: <g><Blob /><Drop /><B11 c="#b0888e">{cross}</B11></g>,
  reshape: <path d="M1.500 7C1.500 2 5 .8 9 2s5 1 8 .3 6 1 6 5-2.500 5-6 4.200-6.500 0-7 3-1 5.500-3.200 5.700S4.500 17 3.500 13 1.500 10 1.500 7z" fill="#b8bea8" stroke="#777" strokeWidth=".9" />,
  offset: <g stroke="#777" strokeWidth="1"><path d="M15 1.500c5-1.500 9 3 7 7-2 5-6 4-7 8s-6 7-10 5.500S.5 15 3 12.500s5.500-2.500 7-6 2-4.200 5-5z" fill="#c8c4a0" /><path d="M15.500 4.500c3-1 5 1 4 3.500-2 4-5 3-6 7s-5 5-7.500 3.500-1-4.500.5-5 4.500-1 6-4S13.500 5 15.500 4.500z" fill="#b4bcb0" /></g>,
  rotV: <g><path d="M2.500 4L7 15.500 13 5.500h7" fill="none" stroke="#777" strokeWidth="1.200" /><Sq x={2.500} y={3} /><Sq x={7} y={15.500} /><Sq x={13.500} y={5} /><Sq x={20} y={5} /><B11 c="#6a6a6a">{rotG}</B11></g>,
  trim: <g stroke="#888" strokeWidth="1.700"><path d="M10.500 0v11M1 12h21M10.500 13v6M16 13v11" /><Sq x={10.500} y={12} r={1.600} /><Sq x={16} y={12} r={1.600} /><g stroke="none"><g transform="translate(16 1) scale(.64)"><B11 x={0} y={0} c="#8f875f" /></g><g transform="translate(1 17) scale(.64)"><B11 x={0} y={0} c="#b0888e">{cross}</B11></g></g></g>,
  split, splitP: split,
  mergeF: <g><path d="M1.500 7C1.500 2 6 1 9 2.500c3 1.500 2 7 1.500 9.500C6 14 1.500 12 1.500 7zM22.500 7c0-5-4-6-7.500-4.500-3 1.500-2 7-1.500 9.500 5 2 9 0 9-5z" fill="#b4bab0" stroke="#666" strokeWidth=".9" /><path d="M8 3.500h8M8 6h8M8 8.500h8M6 12c0 6 6 6 8 10M12 1v11" stroke="#555" strokeWidth="1" fill="none" /></g>,
  mergeA: <path d="M2 3h20M2 7.500h7l1-2 2-1 2 1 1 2h7M2 10.500h20M2 15h7l1-2 2-1 2 1 1 2h7M2 18h20M2 22.500h7l1-2 2-1 2 1 1 2h7M12 4v4M12 12v4M12 19v4" stroke="#555" strokeWidth="1" fill="none" />,
  rotSym: <g><path d="M4 20C1 12 4 6 9 3M6 2.500h3.500v3.500" fill="none" stroke="#555" strokeWidth="1.200" /><path d="M12 2l8.500 5.500L12 13z" fill="#a8ada8" stroke="#666" /><path d="M12 13l5 9H7z" fill="#f0f0f0" stroke="#999" /></g>,
  arc: <g><path d="M3 21C3 10 8 3 19 3.500M3 21L10 10 19 3.500" fill="none" stroke="#888" strokeWidth="1.200" /><Sq x={3} y={21} /><Sq x={10} y={10} /><Sq x={19} y={3.500} /><B11 c="#8f875f" /></g>,
  circle: <g><circle cx="10.500" cy="11" r="8.500" fill="none" stroke="#9ea49a" strokeWidth="2.200" /><Sq x={10.500} y={10.500} /><Sq x={5} y={17} /><B11 c="#8f875f" /></g>,
  ellipse: <g><ellipse cx="11" cy="9.500" rx="9" ry="5.500" transform="rotate(-40 11 9.500)" fill="none" stroke="#9ea49a" strokeWidth="1.900" /><Sq x={9.500} y={5} /><Sq x={11.500} y={10} /><Sq x={3.500} y={15.500} /><B11 c="#8f875f" /></g>,
  rect: <g><rect x="4" y="4" width="16" height="13.500" fill="none" stroke="#9ea49a" strokeWidth="2" /><Sq x={4} y={4} /><Sq x={20} y={4} /><Sq x={4} y={17.500} /><B11 c="#8f875f" /></g>,
  poly: <g><path d="M3 11L9.500 2.500l11 3.500v13L9 20.500z" fill="none" stroke="#aeb4aa" strokeWidth="2.400" /><Sq x={3} y={11} /><Sq x={12} y={10.500} /><B11 c="#8f875f" /></g>,

  magnet: <g transform="translate(1 1.500) rotate(40 12 12) scale(.92)"><path d="M4 3h5v10c0 4 6 4 6 0V3h5v10c0 10.500-16 10.500-16 0z" fill="#cc0a12" stroke="#7c0000" strokeWidth=".9" /><path d="M4 2.500h5V7H4zM15 2.500h5V7h-5z" fill="#fff" stroke="#7c0000" strokeWidth=".9" /></g>,
  snapLyr: <g><path d="M4 3l6 17M4 10l6 10M10 20l5-15h6M11 15l5-3h5" fill="none" stroke="#999" strokeWidth="1.100" /><Sq x={4} y={3} /><Sq x={4} y={9} /><Sq x={10} y={20.500} /><Sq x={15} y={5} /><Sq x={21} y={5} /><Sq x={15} y={12} /><Sq x={21} y={12} /><Sq x={10} y={14} /></g>,
  snapVert: <g><Sq x={6} y={6} r={1.700} /><Sq x={18} y={8} r={1.700} /><Sq x={12} y={18.500} r={1.700} /></g>,
  topo: <g stroke="#7dbb7d" strokeWidth="2.200" strokeLinecap="round"><path d="M3 1.500l5 9.500v12M8 11l13-5.500" fill="none" /><rect x="6" y="9" width="4.200" height="4.200" fill="#bbb" stroke="#555" strokeWidth="1.200" /></g>,
  overlap: <g stroke="#444" strokeWidth="1.100"><path d="M3 4C5 0 10 1 13 1.500s9-1 10 4-2 6-5 5.500-5 .5-7 3z" fill="#bcbcbc" /><path d="M2 8C2 3 7 1.500 9.500 4s2 5 4 7 5 4 3.500 8-6 5-8 2 0-5-2.500-7S2 11 2 8z" fill="#84c17f" /><path d="M6 11c4-1 6-2 8-4" strokeDasharray="1.500 1" fill="none" /></g>,
  inter: <g><path d="M3 2l18 21M21 2L3 23" stroke="#a0a0a0" strokeWidth="1.700" /><circle cx="12" cy="12.500" r="2.200" fill="#eee" stroke="#999" /></g>,
  selfSnap: <g><path d="M2 23L21 2" stroke="#a0a0a0" strokeWidth="1.700" /><path d="M5 4l5 7h8l2 9-6-5H6z" fill="#a8a280" /></g>,
  trace: <g><path d="M2 23l6-4L4.500 8 19 16" fill="none" stroke="#999" strokeWidth="1.900" /><circle cx="4.500" cy="8" r="2" fill="#eee" stroke="#999" /><circle cx="8.500" cy="19" r="2" fill="#eee" stroke="#999" /><path d="M13 2l3-1 5 15-2-1z" fill="#c8c49c" stroke="#888" strokeWidth=".8" /></g>,

  brush: <g><path d="M1.500 9.500C4 5 9 5 13 7l-2 5-9 1z" fill="#f2d22e" /><path d="M1.500 12c3-2 6-1 9-1l1 4-9 2z" fill="#4d7fd0" /><path d="M1 19c3-3 6-3 9-3l6 2-4 4.500c-4-2-7-1.500-11-3.500z" fill="#d8262c" /><path d="M8 10.500l6-1.500 4.500 5-2.500 7.500c-4-1-8-5-8-11z" fill="#d69a45" stroke="#8a5c1c" strokeWidth=".7" /><path d="M15 10.500l8-8.500 1 1-6 10z" fill="#d69a45" stroke="#8a5c1c" strokeWidth=".8" /></g>,
  addGroup: <g fill="none" stroke="#777" strokeWidth="1.200"><path d="M1 12v9.500h12M4.500 8v10h9" /><path d="M8 5h13v10H8z" /><path d="M11.500 14V3c0-3 4-3 4 0v13" stroke="#3f5d7a" strokeWidth="1.400" /><g stroke="none"><B9 c="#5a9060"><path d="M4.500 1.500v6M1.500 4.500h6" stroke="#fff" strokeWidth="1.900" /></B9></g></g>,
  eye, funnel,
  filterExpr: <g>{epsilon}<path d="M13 12h11l-3 4v7h-2v-5h-2v5h-2v-7z" fill="#9a9a9a" /></g>,
  expand: <g>{treeStub}<path d="M15 1.500h5V14h3.500L17.500 22 11 14h4z" fill={BL} stroke={BD} strokeWidth=".9" /></g>,
  collapse: <g>{treeStub}<path d="M15 21.500h5V9h3.500L17.500 1 11 9h4z" fill={BL} stroke={BD} strokeWidth=".9" /></g>,
  remove: <g><rect x="2" y="1.500" width="18" height="17" fill="#f0f0f0" stroke="#777" strokeWidth="1.100" /><rect x="14" y="15.500" width="10" height="6.500" rx="1.500" fill="#ef4c50" /><path d="M16 18.800h6" stroke="#fff" strokeWidth="1.800" /></g>,

  gears: <g><Gear cx={8} cy={8.500} r={8} f="#d11a1a" s="#b01010" w={0.5} hub="#efefef" /><Gear cx={20} cy={13} r={6} f="#777" s="#666" w={0.4} hub="#efefef" /><Gear cx={12.500} cy={20} r={5} f="#7ba3dc" s="#6a92cc" w={0.4} hub="#efefef" /></g>,
  py: python(1, 1, 0.9),
  clock: clock(1.200),
  doc: <g><path d="M3.500 1h12l5 5v17h-17z" fill="#fff" stroke="#666" strokeWidth="1.100" /><path d="M15.500 1v5h5" fill="none" stroke="#666" /><path d="M6 9.500h12M6 13h12M6 16.500h12M6 20h8M6 6h6" stroke="#444" strokeWidth="1.200" /></g>,
  editInPlace: <g><rect x="1.500" y="2" width="15" height="14" fill={YE} stroke={YD} /><g transform="translate(7.500 4) scale(.8)">{pencil()}</g></g>,
  wrench,
  rowsY: <g>{rowsY()}</g>,
  invert: <g><path d="M2.500 2.500h19v19z" fill="#f4f4f4" stroke="#888" /><path d="M2 4l17.500 18H2z" fill={YE} stroke={YD} /></g>,
  deselectS: <g><rect x="2" y="2" width="13" height="14" fill={YE} stroke={YD} />{noBadge}</g>,
  moveTop: <g>{table}<rect x="2.500" y="16.500" width="19" height="5" fill={YE} stroke={YD} /><path d="M10.500 18V9H7l5-6 5 6h-3.500v9z" fill={BL} stroke={BD} strokeWidth=".8" /></g>,
  newCol: <g>{table}<rect x="6" y="1" width="5" height="22" fill="#ddd8b0" stroke="#666" /><B11 c="#8f875f" /></g>,
  delCol: <g>{table}<rect x="6" y="1" width="5" height="22" fill="#e0b8b8" stroke="#666" /><B11 c="#b0888e">{cross}</B11></g>,
  fieldCalc: <g>{table}<g transform="translate(1 0)">{pencil("#d9763a", "#f2a878")}</g></g>,
  condFmt: <g fill="#fff" stroke="#888"><rect x="2.500" y="2" width="19" height="5.500" /><rect x="2.500" y="9.200" width="19" height="5.500" fill="#a5e8a5" stroke="#4a9a4a" /><rect x="2.500" y="16.500" width="19" height="5.500" /><path d="M9 4.800h10M9 12h10" stroke="#444" strokeWidth="1.300" /><path d="M5 19.300h2.500" stroke="#b00" strokeWidth="2" /><path d="M9 19.300h10" stroke="#f0b0b0" strokeWidth="1.600" /></g>,
  dock: <g><rect x="4" y="2" width="17.500" height="17" fill="#f2f2f2" stroke="#888" /><path d="M4 2h17.500v3.500H4z" fill="#666" /><g transform="translate(.8 8.500) scale(.66 .6)">{table}</g></g>,
  formView: <g><rect x="2.500" y="2" width="19" height="20" fill="#e7f0fa" stroke="#6d97c4" strokeWidth="1.200" /><path d="M5 8h4M5 16h4" stroke="#445" strokeWidth="2" /><rect x="10.500" y="5.500" width="8" height="5" fill="#fff" stroke="#6d97c4" /><rect x="10.500" y="13.500" width="8" height="5" fill="#fff" stroke="#6d97c4" /></g>,
  grayTable: <g><rect x="1" y=".5" width="22" height="23" rx="1.500" fill="#e9e9e9" stroke="#808080" strokeWidth="1.200" /><path d="M1 7h22" stroke="#888" /><path d="M4 4h5M12 4h8M4 11h5M12 11h8M4 15h5M12 15h8M4 19h5M12 19h8" stroke="#777" strokeWidth="1.200" /></g>,
  points: <g fill="#fff" stroke="#888" strokeWidth="1.300"><circle cx="3.500" cy="19.500" r="1.900" /><circle cx="7" cy="8" r="1.900" /><circle cx="20.500" cy="3.500" r="1.900" /></g>,
  raster: <g><path d="M1 1h22v22H1z" fill="#dce8f5" />{[[0, 0, 0], [1, 0, 1], [2, 0, 0], [0, 1, 1], [1, 1, 0], [2, 1, 1], [0, 2, 0], [1, 2, 1]].map(([x, y, l], i) => <rect key={i} x={1 + x * 7.300} y={1 + y * 7.300} width="7.400" height="7.400" fill={l ? "#a9c5e6" : "#22354b"} />)}<path d="M15.700 15.700h7.400V23h-7.400z" fill="#fff" /></g>,
  crsQ: <g><ellipse cx="12" cy="12" rx="11" ry="6" fill="none" stroke="#bbb" strokeWidth="1.300" /><path d="M1 12h22M12 4v16M6 8c-2 3-2 6 0 9M18 8c2 3 2 6 0 9" stroke="#c4c4c4" strokeWidth="1" fill="none" /><text x="5" y="20.500" fontSize="24" fontWeight="bold" fontFamily="DejaVu Sans" fill="#4c4c4c">?</text></g>,
  grass: <g><path d="M12 .8l9.500 9.500L12 20.500 2.500 10.300z" fill="#fff" stroke="#333" strokeWidth=".7" strokeDasharray="1.200 .5" /><path d="M12 18L8 8M12 18l4-10M12 18V4M12 18L6 11.500M12 18l6.500-7M12 18l1.500-9" stroke="#1f9e2c" strokeWidth=".9" fill="none" /><path d="M2.500 13l9.500 9.500L21.500 13" stroke="#111" strokeWidth="1.300" fill="none" /><path d="M3 22.800h7.500M13.500 22.800H21" stroke="#111" strokeWidth="1" /></g>,
  search: <g fill="none" stroke="#8c8c8c" strokeWidth="1.800"><circle cx="9.500" cy="9" r="7.500" /><path d="M15 14.500l7.500 8" strokeWidth="2.800" /></g>,
  lock: <g><path d="M6 12V7c0-7 12-7 12 0v5" fill="none" stroke="#777" strokeWidth="2.200" /><rect x="3" y="11.500" width="18" height="12" rx="1" fill="#5e5e5e" /></g>,
  globe: <g fill="none" stroke="#666" strokeWidth="1.300"><path d="M6 6h12l5 8H1zM3 14c1 5 5 9 9 9s8-4 9-9M8 2h8l2 4H6zM12 2v21M8 6L7 14c0 4 3 8 5 9M16 6l1 8c0 4-3 8-5 9M3.500 10h17M4 18h16" /></g>,
  bubble: <path d="M12 1c7 0 11 4 11 9.500 0 4-2 7-5 8.500 1 2 2 3 3 4-4 0-6-1-8-3.200C5 20 1 16 1 10.500S5 1 12 1z" fill="#676767" />,
  extent: (
    <g>
      <path d="M9 15l6-4c4-1 7 1 7.500 4.500.5 4.500-4 8-8 7.500S7.500 19 9 15z" fill="#fff" stroke="#111" strokeWidth="1.700" />
      <path d="M3.500 4.500c0-2 1.500-3.500 3.500-3.500s3.500 1.500 4 3.500l2 7.500-5 3z" fill="#fff" stroke="#111" strokeWidth="1.900" />
      <path d="M7 3l2.500 9M11 8l5-4 2 2-3 5" fill="none" stroke="#111" strokeWidth="1.800" />
      <circle cx="15.500" cy="17.500" r="2.600" fill="#fff" stroke="#111" strokeWidth="1.500" />
      <path d="M.5 16h2M4 18.500l2 1M3 12l-2 1M19 2.500l3-1M19.500 6l3-1M21 9.500l2-.5" stroke="#111" strokeWidth="1.500" />
    </g>
  ),
  logo: (
    <g>
      <path d="M12 .5C18.500.5 23 5 23 12c0 2-.3 3.600-1 5.200l-4.200-4.300c.6-5-2.200-8-5.800-8-4 0-6.200 3-6.200 7.100S8 19 12 19.200c.9 0 1.700-.1 2.400-.4l4 4C16.500 23.600 14.500 24 12 24 5.500 24 1 19 1 12.200S5.500.5 12 .5z" fill="#72a52b" />
      <path d="M12 .5C18.500.5 23 5 23 12h-5c0-4.500-2.500-7.100-6-7.100z" fill="#93b023" />
      <path d="M14 14h4.600L24 19.500V24h-2z" fill="#4a9a3c" /><path d="M14 14l8 10h-3.500L12.500 18z" fill="#69aa35" />
      <path d="M9.500 9.500h5L18 13.500v.5h-3.500z" fill="#f5b81f" /><path d="M9.500 9.500l5 5V18L9.500 13z" fill="#ee7913" />
    </g>
  ),
};

const Svg = styled.svg`
  display: block;
  flex: none;
  overflow: visible;
  ${(p) => p.$off && css`filter: grayscale(.7); opacity: .4;`}
`;
const Icon = ({ n, size = 48, off }) => (
  <Svg width={size} height={size} viewBox="0 0 24 24" $off={off}>{I[n]}</Svg>
);

/* ---------- shell ---------- */
const Window = styled.div`
  width: 2560px; height: 1504px;
  display: flex; flex-direction: column;
  background: #efefef;
`;
const TitleBar = styled.header`
  height: 45px; flex: none;
  display: flex; align-items: flex-start;
  background: #f3f3f3;
  color: #8d8d8d;
  font: 22px/46px ${SEGOE};
  padding: 0 3px 0 1px;
`;
const TitleLogo = styled.div`padding: 7px 7px 0 0;`;
const Caption = styled.div`
  width: 92px; height: 43px;
  display: grid; place-items: center;
  background: ${(p) => (p.$hot ? "#e8e8e8" : "transparent")};
`;
const Grow = styled.div`flex: 1;`;
const MenuBar = styled.nav`
  height: 37px; flex: none;
  display: flex; align-items: center;
  padding: 1px 0 0 20px;
  border-bottom: 2px solid #d8d8d8;
  color: #979797;
`;
const MenuItem = styled.div`
  margin-right: ${(p) => p.$gap}px;
`;
const Mnemonic = styled.u`
  text-underline-offset: 3px; text-decoration-thickness: 1.5px; text-decoration-skip-ink: none;
`;
const ToolRow = styled.div`
  height: ${(p) => p.$h}px; flex: none;
  display: flex; align-items: center; padding-top: 3px;
  background: linear-gradient(#fbfbfb, #eeeeee);
  border-bottom: 2px solid #b3b3b3;
`;
const Grip = styled.div`
  width: ${(p) => p.$w}px; height: 36px; flex: none;
  background: radial-gradient(circle, #b4b4b4 1.2px, transparent 1.7px) content-box content-box;
  background-size: 6px 6px;
  padding-left: ${(p) => p.$w - 17}px;
  padding-right: 5px;
`;
const Slot = styled.div`
  position: relative;
  width: ${(p) => p.$w}px; height: 62px; flex: none;
  display: flex; align-items: center; justify-content: center;
`;
const ToolButton = styled.div`
  width: 63px; height: 62px;
  display: flex; align-items: center; justify-content: center;
  border: 2px solid #a9a9a9; border-radius: 5px;
  background: ${(p) => (p.$kind === "white" ? "linear-gradient(#fff, #f8f8f8)" : p.$kind === "off" ? "#dadada" : "#dcdcdc")};
  ${(p) => p.$kind === "off" && css`border-color: #bdbdbd;`}
`;
const Drop12 = styled.i`
  width: ${(p) => p.$s || 15}px; height: ${(p) => (p.$s || 15) * 0.55}px;
  background: ${(p) => p.$c || "#4d4d4d"};
  clip-path: ${(p) => (p.$up ? "polygon(50% 0, 100% 100%, 0 100%)" : "polygon(0 0, 100% 0, 50% 100%)")};
  flex: none;
`;
const Corner = styled.div`
  position: absolute; right: ${(p) => p.$r}px; bottom: ${(p) => p.$b}px;
  display: flex;
`;
const ArrowSlot = styled.div`
  width: 24px; flex: none; display: flex; padding-left: 4px;
`;
const Rule = styled.div`
  width: 14px; flex: none; height: ${(p) => p.$h || 38}px;
  border-left: 2px solid #cfcfcf; margin-left: 7px; margin-right: -7px;
`;

function Tools({ items, w = 66, size = 48, ruleH }) {
  return items.map((it, i) => {
    if (it === "H") return <Grip key={i} $w={32} />;
    if (it === "H0") return <Grip key={i} $w={25} />;
    if (it === "A") return <ArrowSlot key={i}><Drop12 $c="#555" /></ArrowSlot>;
    if (it === "a") return <ArrowSlot key={i}><Drop12 $c="#9c9c9c" /></ArrowSlot>;
    if (it === "|") return <Rule key={i} $h={ruleH} />;
    if (typeof it !== "string") return <React.Fragment key={i}>{it}</React.Fragment>;
    const off = it.endsWith("-");
    const big = size > 40;
    const [name, mod] = it.replace(/-$/, "").split(":");
    const icon = <Icon n={name} size={size} off={off} />;
    return (
      <Slot key={i} $w={w}>
        {mod === "on" || mod === "white" || mod === "off" ? <ToolButton $kind={mod}>{icon}</ToolButton> : icon}
        {(mod === "m" || mod === "off") && <Corner $r={big ? 7 : 5} $b={big ? 6 : 15}><Drop12 $s={big ? 12 : 11} $c={off ? "#999" : "#444"} /></Corner>}
      </Slot>
    );
  });
}

const row1 = ["H0", "new", "open", "save", "layout", "layoutMgr", "style", "H", "hand:on", "panSel", "zoomIn", "zoomOut", "zoomFull", "zoomSel", "zoomLayer", "zoomNative-", "zoomLast", "zoomNext-", "newMap", "new3d", "bookNew", "bookShow", "temporal", "refresh", "H", "select-", "a", "selExpr", "A", "deselect", "A", "selLoc", "A", "H", "identify-", "abacus", "gear:on", "sigma", "table", "A", "measure", "A", "tips:on", "action-", "a"];
const row2 = ["H0", "dsm", "gpkg", "shp", "spatialite", "mem:white", "mesh", "virtual", "H", "edits:m-", "pencil", "saveEdits-", "digitize-", "a", "addRow-", "vertex-", "a", "modAttr-", "trash-", "scissors-", "copy-", "paste-", "undo-", "redo-", "H", "lblDis-", "diagram-", "|", "lblPin", "lblRed", "|", "lblYPin", "lblEye", "lblMove", "lblRot", "lblEdit", "H", "metasearch", "H", "python", "chart", "A", "H", "help", "H"];
const row3 = ["H0", "cad-", "fMove-", "a", "fRot-", "fScale-", "simplify-", "addRing-", "addPart-", "fillRing-", "delRing-", "delPart-", "reshape-", "offset-", "rotV-", "trim-", "split-", "splitP-", "mergeF-", "mergeA-", "rotSym-", "a", "H", "arc-", "circle-", "a", "ellipse-", "a", "rect-", "a", "poly-", "a"];

const menus = [["Project", 3, 68, 28], ["Edit", 0, 37, 29], ["View", 0, 46, 28], ["Layer", 0, 54, 27], ["Settings", 0, 79, 28], ["Plugins", 0, 69, 29], ["Vector", 4, 62, 28], ["Raster", 0, 62, 29], ["Database", 0, 90, 29], ["Web", 0, 44, 28], ["Mesh", 0, 51, 30], ["Processing", 3, 102, 29], ["Help", 0, 44, 0]];

const Spin = styled.div`
  display: flex; align-items: stretch;
  width: ${(p) => p.$w}px; height: 40px;
  margin-left: ${(p) => p.$ml || 0}px;
  border: 2px solid #a9a9a9; border-radius: 4px;
  background: ${(p) => (p.$off ? "#efefef" : "#fff")};
  color: ${(p) => (p.$off ? "#777" : "#000")};
  flex: none;
`;
const SpinText = styled.div`flex: 1; display: flex; align-items: center; padding: 3px 0 0 8px;`;
const SpinBtns = styled.div`
  width: 28px; border-left: 1px solid #b5b5b5;
  background: linear-gradient(#fff, #f2f2f2);
  display: flex; flex-direction: column; align-items: center; justify-content: center; gap: 6px;
`;
const Combo = styled(Spin)`
  height: 43px;
  border-color: ${(p) => (p.$off ? "#c8c8c8" : "#a9a9a9")};
  background: ${(p) => (p.$off ? "linear-gradient(#fdfdfd, #f0f0f0)" : "#fff")};
`;
const ComboArrow = styled.div`
  width: ${(p) => p.$w || 42}px; display: flex; align-items: center; justify-content: center;
  ${(p) => p.$line && css`border-left: 1px solid #c4c4c4; background: linear-gradient(#fff, #f5f5f5);`}
`;

/* ---------- docks ---------- */
const Workspace = styled.main`
  height: 1056px; flex: none; display: flex; align-items: stretch;
`;
const LeftDock = styled.section`
  width: 461px; display: flex; flex-direction: column; flex: none;
`;
const Splitter = styled.div`
  width: ${(p) => p.$w}px; flex: none; display: flex; align-items: center; justify-content: center;
`;
const SplitDots = styled.div`
  width: 3px; height: 30px; margin-bottom: 4px;
  background: radial-gradient(circle, #aaa 1.2px, transparent 1.6px) 0 0 / 3px 6px;
`;
const DockHead = styled.div`
  height: 40px; flex: none;
  display: flex; align-items: center;
  padding: 6px ${(p) => p.$r}px 0 ${(p) => p.$l}px;
  gap: 6px;
`;
const DockTools = styled.div`
  height: 62px; flex: none; display: flex; align-items: center;
  padding-left: ${(p) => p.$l}px;
`;
const Tree = styled.div`
  flex: 1; background: #fff; border: 2px solid #b9b9b9; border-left-width: 1px;
  display: flex; flex-direction: column;
`;
const LayerRow = styled.div`
  height: 36px; flex: none; display: flex; align-items: center;
  background: ${(p) => (p.$sel ? "#efefef" : "transparent")};
  padding-right: 9px;
`;
const Twist = styled.div`
  width: ${(p) => p.$w}px; padding-left: ${(p) => p.$pl}px; flex: none; display: flex;
`;
const TriR = styled.i`
  width: 9px; height: 16px; background: #5c5c5c; clip-path: polygon(0 0, 100% 50%, 0 100%);
`;
const Check = styled.div`
  width: ${(p) => p.$w || 28}px; height: ${(p) => p.$h || 28}px; flex: none;
  border: 2px solid #b5b5b5; border-radius: 2px; background: #fff;
  box-shadow: inset 0 2px 3px #ededed;
  display: grid; place-items: center;
`;
const LayerName = styled.div`
  font-family: "DejaVu Sans", sans-serif; font-stretch: normal; font-weight: bold; font-size: 20px;
  font-style: ${(p) => (p.$it ? "italic" : "normal")};
  color: ${(p) => (p.$it ? "#808080" : "#000")};
  flex: 1; padding-top: 1px;
`;
const TableSym = styled.div`width: 44px; flex: none; padding-left: 2px;`;
const SwatchCol = styled.div`width: 57px; flex: none; padding-left: 12px;`;
const SymCol = styled.div`width: 57px; flex: none; padding-left: 15px;`;
const Swatch = styled.div`
  width: 32px; height: 32px; border: 1.5px solid #333; background: ${(p) => p.$c};
`;
const CrsBadge = styled.div`
  width: 33px; height: 33px; border: 1px solid #c4c4c4; border-radius: 4px; background: #f6f6f6;
  display: grid; place-items: center; flex: none;
`;

const Tick = () => (
  <Svg width="20" height="22" viewBox="0 0 20 22"><path d="M3 12.500l4.500 6.500L17 2.500" fill="none" stroke="#000" strokeWidth="3" /></Svg>
);
const HeadBtn = ({ close }) => (
  <Svg width="22" height="22" viewBox="0 0 22 22">
    <rect x="1" y="1" width="20" height="20" rx="3" fill="#f4f4f4" stroke="#666" strokeWidth="1.600" />
    {close ? <path d="M6 6l10 10M16 6L6 16" stroke="#555" strokeWidth="3.800" /> : <g fill="#f4f4f4" stroke="#666" strokeWidth="1.500"><rect x="9" y="5" width="8" height="8" rx="1" /><rect x="5" y="9" width="8" height="8" rx="1" /></g>}
  </Svg>
);

const layers = [
  ["R.HCMC.NodoValle", 208, "points", 0, 1], ["R.HCMC.NodoValle", 208, "points", 0, 1],
  ["R.HCMC.NodoValle", 207, "table"], ["NodoEjeValleGIS", 187, "table"], ["CuencaHastaJ4660PMed", 271, "table"],
  ["CuencaHastaJ4660", 211, "#ffffff", 1], ["CuencaHastaJ4682", 213, "#e25a87"], ["CuencaHastaJ4685", 213, "#beb297"],
  ["CuencaHastaSink1", 207, "#85b66f"], ["CuencaLateral1Este", 221, "#729b6f"], ["CuencaLateral2Oeste", 237, "#e77089"],
  ["PMedia1981a2003", 206, "raster", 1, 1], ["ETR_Turc", 108, "raster", 0, 1],
];

function LayerSymbol({ kind }) {
  if (kind[0] === "#") return <SwatchCol><Swatch $c={kind} /></SwatchCol>;
  return <SymCol><Icon n={kind} size={28} /></SymCol>;
}

function Layers() {
  return (
    <LeftDock>
      <DockHead $l={8} $r={3}><Fit w={62}>Layers</Fit><Grow /><HeadBtn /><HeadBtn close /></DockHead>
      <DockTools $l={7}>
        <Tools w={50} size={32} items={["brush", "addGroup", "eye:m", "funnel:m", "filterExpr", <ArrowSlot key="a"><Drop12 $s={15} /></ArrowSlot>, "expand", "collapse", "remove"]} />
      </DockTools>
      <Tree>
        {layers.map(([name, w, kind, on, tw], i) => {
          const isTable = kind === "table";
          return (
            <LayerRow key={i} $sel={i === 4}>
              <Twist $w={47} $pl={17}>{tw && <TriR />}</Twist>
              {isTable ? <TableSym><Icon n="grayTable" size={30} /></TableSym> : <Check>{on ? <Tick /> : null}</Check>}
              {!isTable && <LayerSymbol kind={kind} />}
              <LayerName $it={!isTable && !on}><Fit w={w} u={i === 4}>{name}</Fit></LayerName>
              {kind === "raster" && <CrsBadge><Icon n="crsQ" size={28} /></CrsBadge>}
            </LayerRow>
          );
        })}
      </Tree>
    </LeftDock>
  );
}

/* ---------- map ---------- */
const VIR = ["#420b57", "#431964", "#422a71", "#42367c", "#3e4685", "#3b538a", "#375f8c", "#316b8d", "#2c778e", "#28848d", "#25908b", "#249a86", "#2fa87f"];
const vir = (t) => {
  const k = Math.max(0, Math.min(11.999, t / 5)), i = Math.floor(k), f = k - i;
  const p = (h) => [1, 3, 5].map((j) => parseInt(h.slice(j, j + 2), 16));
  const a = p(VIR[i]), b = p(VIR[i + 1]);
  return `rgb(${a.map((v, j) => Math.round(v + (b[j] - v) * f)).join(",")})`;
};
/* Field of normalised values (percent), 17 columns by 9 rows. */
const FIELD = [
  [5, 4, 6, 8, 10, 8, 6, 8, 9, 5, 13, 17, 19, 20, 21, 23, 26],
  [7, 7, 9, 11, 12, 12, 12, 13, 14, 16, 19, 21, 22, 23, 24, 26, 30],
  [6, 9, 11, 12, 13, 14, 14, 15, 17, 19, 21, 23, 24, 25, 26, 28, 32],
  [5, 10, 13, 14, 15, 16, 17, 21, 24, 26, 27, 26, 24, 24, 27, 30, 36],
  [6, 10, 14, 15, 17, 19, 21, 24, 27, 29, 29, 28, 26, 27, 30, 33, 39],
  [9, 13, 16, 19, 22, 24, 26, 28, 31, 34, 35, 35, 34, 35, 37, 40, 43],
  [14, 17, 20, 22, 25, 28, 30, 32, 35, 38, 40, 39, 38, 39, 41, 43, 46],
  [19, 21, 24, 27, 29, 31, 31, 31, 36, 42, 44, 41, 38, 38, 39, 41, 44],
  [21, 25, 30, 37, 48, 60, 51, 38, 35, 35, 36, 37, 37, 37, 38, 39, 41],
];
const MW = 1589, MH = 1050, STRIPS = 70, PAD = 6;
const strips = Array.from({ length: STRIPS + 2 * PAD }, (_, n) => {
  const s = Math.max(0, Math.min(STRIPS - 1, n - PAD));
  const y = ((s + 0.5) / STRIPS) * 8, i = Math.min(7, Math.floor(y)), t = y - i, f = t * t * (3 - 2 * t) * 0.4 + t * 0.6;
  return FIELD[0].map((_, c) => vir(FIELD[i][c] * (1 - f) + FIELD[i + 1][c] * f));
});
const BASIN = "M698 20L685 42 672 50 660 70 640 70 628 76 630 125 620 134 612 148 600 154 584 160 565 152 548 160 540 168 530 160 515 172 495 182 465 202 448 220 425 222 405 232 392 236 398 262 396 280 405 290 402 304 370 306 343 312 345 335 354 350 358 370 370 390 372 402 358 418 356 440 348 452 325 456 320 444 312 436 295 448 280 460 270 492 262 486 230 494 205 470 192 464 180 454 168 464 158 478 152 508 138 526 122 522 112 522 100 544 80 562 60 574 58 584 68 602 84 606 108 606 118 616 120 636 132 658 150 664 164 668 164 688 152 706 160 714 182 720 196 734 214 740 228 768 244 768 254 772 260 794 272 800 278 850 300 852 304 862 298 886 278 902 282 914 310 914 324 908 346 942 356 978 384 990 404 1026 412 1054 438 1074 444 1100 456 1116 470 1122 480 1164 496 1162 510 1162 516 1182 530 1192 542 1202 552 1178 570 1186 590 1198 630 1208 646 1226 644 1250 640 1264 650 1270 668 1264 690 1266 708 1266 722 1284 738 1298 754 1294 770 1310 790 1314 812 1316 826 1328 836 1352 848 1340 856 1320 876 1310 884 1284 896 1248 912 1240 922 1212 936 1214 952 1190 962 1156 974 1124 988 1108 994 1088 990 1062 1016 1060 1032 1024 1036 984 1044 974 1062 970 1076 956 1086 956 1094 942 1134 914 1160 906 1176 884 1188 848 1200 818 1214 790 1240 766 1250 746 1256 714 1264 678 1272 656 1276 630 1290 624 1306 566 1316 544 1328 502 1336 478 1350 450 1354 430 1368 404 1386 394 1394 370 1408 352 1424 318 1436 288 1454 280 1464 260 1478 244 1472 200 1464 182 1452 174 1436 158 1418 148 1414 104 1368 102 1352 92 1340 82 1318 78 1302 62 1300 46 1322 18";
const MapFrame = styled.section`
  width: 1589px; height: 1050px; margin-top: 5px; flex: none;
  position: relative; overflow: hidden;
  background: #3b538b; outline: 1px solid #b9b9c9;
`;
const MapSvg = styled.svg`display: block; text { font-stretch: normal; }`;
function MapCanvas() {
  const h = MH / STRIPS;
  return (
    <MapFrame>
      <MapSvg width={MW} height={MH} viewBox={`0 0 ${MW} ${MH}`}>
        <defs>
          {strips.map((cs, i) => (
            <linearGradient id={`s${i}`} key={i} gradientUnits="userSpaceOnUse" x1="0" x2={MW} y1="0" y2="0">
              {cs.map((c, j) => <stop key={j} offset={j / 16} stopColor={c} />)}
            </linearGradient>
          ))}
          <linearGradient id="ridge" gradientUnits="userSpaceOnUse" x1="0" x2="900" y1="0" y2="0">
            <stop offset="0" stopColor="#3d1560" stopOpacity=".08" /><stop offset=".6" stopColor="#3d1560" stopOpacity=".14" /><stop offset="1" stopColor="#3d1560" stopOpacity="0" />
          </linearGradient>
          <filter id="soft" filterUnits="userSpaceOnUse" x="-100" y="-90" width={MW + 200} height={MH + 180} colorInterpolationFilters="sRGB"><feGaussianBlur stdDeviation="24 12" /></filter>
        </defs>
        <g filter="url(#soft)">
          {strips.map((_, i) => <rect key={i} x="-100" y={(i - PAD) * h} width={MW + 200} height={h + 1} fill={`url(#s${i})`} />)}
        </g>
        <path d="M0 195L260 293 320 349 403 388 413 420 494 432 548 459 580 444 630 432 920 340 920 0 0 0z" fill="url(#ridge)" />
        <g transform="translate(904 -7) scale(.3827 .33333)">
          <path d={BASIN} fill="none" stroke="#232323" strokeWidth="5" strokeLinejoin="round" vectorEffect="non-scaling-stroke" />
        </g>
        <path d="M1262 0h12" stroke="#232323" strokeWidth="2" />
        <text x="1093" y="199.500" fontSize="25" fontFamily="Open Sans, Noto Sans, sans-serif" textLength="236" lengthAdjust="spacing" fill="#333" stroke="#fafafa" strokeWidth="6" strokeLinejoin="round" paintOrder="stroke">Cuenca hasta J4660</text>
      </MapSvg>
      <AttributeTable />
    </MapFrame>
  );
}

/* ---------- attribute table window ---------- */
const Dialog = styled.div`
  position: absolute; left: 110px; top: 496px;
  width: 1368px; height: 416px;
  border-radius: 14px; background: #efefef; overflow: hidden;
  outline: 2px solid rgba(90, 90, 110, .55);
  display: flex; flex-direction: column;
`;
const DlgTitle = styled.div`
  height: 57px; flex: none; background: #f3f3f3; color: #8d8d8d;
  display: flex; align-items: center; padding: 0 0 2px 13px;
  font: 22px ${SEGOE};
`;
const DlgLogo = styled.div`margin: -2px 7px 0 0;`;
const DlgTools = styled.div`height: 61px; flex: none; display: flex; align-items: center; padding: 0 0 3px 7px;`;
const Grid = styled.div`
  height: 239px; flex: none; border: 2px solid #b9b9b9; border-left-width: 1px; border-right-width: 1px;
  background: linear-gradient(90deg, #efefef 22px, #fff 22px);
  display: flex; flex-direction: column;
`;
const HeadRow = styled.div`height: 35px; flex: none; display: flex; background: #efefef;`;
const HeadCell = styled.div`
  width: ${(p) => p.$w}px; flex: none;
  border-right: ${(p) => (p.$last ? 0 : 1)}px solid #bbb; border-bottom: 2px solid #ababab;
  background: linear-gradient(#fdfdfd, #ececec);
  display: flex; align-items: center; justify-content: center; padding: 4px 0 0 4px;
`;
const BodyRow = styled.div`height: 60px; flex: none; display: flex;`;
const RowNo = styled.div`
  width: 22px; flex: none; background: linear-gradient(#fdfdfd, #ececec);
  border-right: 2px solid #ababab; border-bottom: 2px solid #ababab;
  display: flex; align-items: center; justify-content: center; padding-top: 6px;
`;
const Cell = styled.div`
  width: ${(p) => p.$w}px; flex: none; border-right: 1px solid #c6c6c6; border-bottom: 1px solid #c6c6c6;
  display: flex; align-items: center; padding-left: 8px;
`;
const DlgFoot = styled.div`flex: 1; display: flex; align-items: center; padding: 0 6px 2px 6px;`;
const ShowAll = styled.div`
  position: relative; width: 242px; height: 47px;
  border: 2px solid #adadad; border-radius: 5px; background: linear-gradient(#fdfdfd, #f1f1f1);
  display: flex; align-items: center; padding-left: 4px; gap: 4px;
`;
const ShowAllText = styled.div`padding-top: 3px;`;
const ViewBtn = styled.div`
  width: 48px; height: 47px; display: grid; place-items: center;
  ${(p) => p.$on && css`border: 2px solid #adadad; border-radius: 5px; background: #dcdcdc;`}
`;
const cols = [["Name", 56, 251, "Cuenca hasta J4660", 194], ["Shape_Leng", 118, 200, "101944.5260000…", 180], ["Shape_Area", 115, 200, "225357613.6579…", 181], ["_count", 66, 200, "292063", 72], ["_mean", 65, 200, "1508.4794617291", 174]];

const WinGlyph = ({ k, c = "#8a8a8a" }) => (
  <Svg width="22" height="22" viewBox="0 0 22 22" fill="none" stroke={c} strokeWidth="1.800">
    {k === "min" && <path d="M1 11h20" />}
    {k === "max" && <rect x="1.500" y="1.500" width="19" height="19" rx="2" />}
    {k === "restore" && <g><rect x="1.500" y="5.500" width="14.500" height="14.500" rx="3" /><path d="M5.500 2h10c3 0 5 2 5 5v9" /></g>}
    {k === "x" && <path d="M1 1l20 20M21 1L1 21" />}
  </Svg>
);

function AttributeTable() {
  return (
    <Dialog>
      <DlgTitle>
        <DlgLogo><Icon n="logo" size={31} /></DlgLogo>
        <Fit w={710}>CuencaHastaJ4660PMed — Features Total: 1, Filtered: 1, Selected: 0</Fit>
        <Grow />
        <Caption><WinGlyph k="min" /></Caption><Caption><WinGlyph k="max" /></Caption><Caption><WinGlyph k="x" /></Caption>
      </DlgTitle>
      <DlgTools>
        <Tools w={50} size={32} ruleH={30} items={["pencil", "modAttr-", "saveEdits-", "refresh", "|", "addRow:m-", "trash-", "scissors-", "copy-", "paste-", "|", "selExpr", "rowsY", "invert", "deselectS", "funnel", "moveTop", "panSel", "zoomSel", "|", "newCol-", "delCol-", "fieldCalc", "abacus", "|", "condFmt", "|", "actionBlue", "dock"]} />
      </DlgTools>
      <Grid>
        <HeadRow>
          <HeadCell $w={22} />
          {cols.map(([h, hw, w], i) => <HeadCell key={h} $w={w} $last={i === 4}><Fit w={hw}>{h}</Fit></HeadCell>)}
        </HeadRow>
        <BodyRow>
          <RowNo>1</RowNo>
          {cols.map(([h, , w, v, vw]) => <Cell key={h} $w={w}><Fit w={vw}>{v}</Fit></Cell>)}
        </BodyRow>
      </Grid>
      <DlgFoot>
        <ShowAll>
          <Icon n="table" size={32} />
          <ShowAllText><Fit w={175}>Show All Features</Fit></ShowAllText>
          <Corner $r={2} $b={4}><Drop12 $s={12} /></Corner>
        </ShowAll>
        <Grow />
        <ViewBtn><Icon n="formView" size={32} /></ViewBtn><ViewBtn $on><Icon n="table" size={32} /></ViewBtn>
      </DlgFoot>
    </Dialog>
  );
}

/* ---------- processing ---------- */
const RightDock = styled.section`flex: 1; display: flex; flex-direction: column;`;
const RightTools = styled(DockTools)`height: 64px; padding-bottom: 4px;`;
const SearchBox = styled.div`
  height: 43px; flex: none; border: 2px solid #a9a9a9; border-radius: 5px; background: #fff;
  display: flex; align-items: center; padding: 2px 15px 0 15px; gap: 14px;
`;
const PTree = styled.div`
  height: 858px; flex: none; background: #fff; border: 1px solid #b0b0b0; border-top: 2px solid #b0b0b0; margin-right: 1px;
`;
const PRow = styled.div`
  height: ${(p) => p.$h}px; display: flex; align-items: center; padding-left: ${(p) => p.$pl}px;
  background: ${(p) => (p.$sel ? "#efefef" : "transparent")};
  padding-bottom: ${(p) => (p.$h < 36 ? 3 : 0)}px;
`;
const PIcon = styled.div`width: ${(p) => p.$w}px; flex: none;`;
const Tabs = styled.div`
  flex: 1; margin-top: 3px; border-top: 2px solid #b5b5b5; display: flex; align-items: flex-start;
`;
const Tab = styled.div`
  width: ${(p) => p.$w}px; height: ${(p) => (p.$on ? 47 : 42)}px; margin-top: ${(p) => (p.$on ? -2 : 0)}px;
  border: 2px solid #b5b5b5; border-top: 0; border-radius: 0 0 4px 4px;
  background: ${(p) => (p.$on ? "#f7f7f7" : "#dedede")};
  display: flex; align-items: center; justify-content: center; padding-top: ${(p) => (p.$on ? 5 : 3)}px;
`;
const ptree = [
  [0, "r", "clock", "Recently used", 134], [0, "d", "logo", "Raster analysis", 144],
  [1, "", "gear", "Raster layer zonal statistics", 262], [1, "", "gear", "Zonal histogram", 155],
  [1, "", "gear", "Zonal minimum/maximum point", 309], [1, "", "gear", "Zonal statistics", 143],
  [0, "d", "grass", "GRASS", 66], [1, "d", null, "Raster (r.*)", 111], [2, "", "grass", "r.stats.zonal", 117],
];

function Toolbox() {
  return (
    <RightDock>
      <DockHead $l={7} $r={4}><Fit w={186}>Processing Toolbox</Fit><Grow /><HeadBtn /><HeadBtn close /></DockHead>
      <RightTools $l={6}>
        <Tools w={50} size={32} ruleH={22} items={["gears:m", "py:m", "clock", "doc", "|", "editInPlace", "|", "wrench"]} />
      </RightTools>
      <SearchBox>
        <Icon n="search" size={25} /><Fit w={86}>zonal sta</Fit><Grow />
        <Svg width="26" height="20" viewBox="0 0 26 20"><path d="M0 10L7 0h19v20H7z" fill="#8a8a8a" /><path d="M10.500 5l9 10M19.500 5l-9 10" stroke="#fff" strokeWidth="2" /></Svg>
      </SearchBox>
      <PTree>
        {ptree.map(([lv, tw, ic, t, w], i) => (
          <PRow key={t} $h={i > 6 ? 32 : 36} $pl={lv * 40} $sel={i === 5}>
            <Twist $w={46} $pl={tw === "r" ? 16 : 12}>{tw === "r" ? <TriR /> : tw ? <Drop12 $s={16} $c="#5c5c5c" /> : null}</Twist>
            <PIcon $w={ic ? 44 : 0}>{ic && <Icon n={ic} size={32} />}</PIcon>
            <Fit w={w}>{t}</Fit>
          </PRow>
        ))}
      </PTree>
      <Tabs>
        <Tab $w={129}><Fit w={79}>Browser</Fit></Tab>
        <Tab $w={234} $on><Fit w={187}>Processing Toolbox</Fit></Tab>
      </Tabs>
    </RightDock>
  );
}

/* ---------- status bar ---------- */
const Status = styled.footer`
  flex: 1; display: flex; align-items: center; padding: 2px 0 1px 8px;
`;
const Locator = styled.div`
  width: 400px; height: 44px; border: 2px solid #a9a9a9; border-radius: 5px; background: #fff; color: #7d7d7d;
  display: flex; align-items: center; padding: 2px 0 0 16px; gap: 15px; flex: none;
`;
const Field = styled(Locator)`width: 213px; color: #000; padding-left: 12px;`;
const SLabel = styled.div`margin-left: ${(p) => p.$ml}px; padding-top: 3px; flex: none;`;
const SIcon = styled.div`margin-left: ${(p) => p.$ml}px; flex: none;`;
const SpinArrows = ({ c = "#555" }) => <SpinBtns><Drop12 $up $c={c} /><Drop12 $c={c} /></SpinBtns>;

export default function App() {
  return (
    <Window>
      <GlobalStyle />
      <TitleBar>
        <TitleLogo><Icon n="logo" size={31} /></TitleLogo>
        <Fit w={254}>*QGIS_M01A02 — QGIS</Fit>
        <Grow />
        <Caption $hot><WinGlyph k="min" c="#000" /></Caption><Caption><WinGlyph k="restore" /></Caption><Caption><WinGlyph k="x" /></Caption>
      </TitleBar>
      <MenuBar>
        {menus.map(([t, u, w, g]) => (
          <MenuItem key={t} $gap={g}><Fit w={w}>{t.slice(0, u)}<Mnemonic>{t[u]}</Mnemonic>{t.slice(u + 1)}</Fit></MenuItem>
        ))}
      </MenuBar>
      <ToolRow $h={78}><Tools items={row1} /></ToolRow>
      <ToolRow $h={78}><Tools items={row2} /></ToolRow>
      <ToolRow $h={78}><Tools items={row3} /></ToolRow>
      <ToolRow $h={76}>
        <Tools items={["H0", "magnet", "snapLyr:m-", "snapVert:off-"]} />
        <Spin $w={168} $ml={1} $off><SpinText><Fit w={23}>12</Fit></SpinText><SpinArrows c="#888" /></Spin>
        <Combo $w={177} $ml={2} $off><SpinText><Fit w={24}>px</Fit></SpinText><ComboArrow><Drop12 $c="#888" /></ComboArrow></Combo>
        <Tools items={["topo", "overlap:m", "inter-", "selfSnap-", "a", "trace-"]} />
      </ToolRow>
      <Workspace>
        <Layers />
        <Splitter $w={15}><SplitDots /></Splitter>
        <MapCanvas />
        <Splitter $w={14}><SplitDots /></Splitter>
        <Toolbox />
      </Workspace>
      <Status>
        <Locator><Icon n="search" size={25} /><Fit w={226}>Type to locate (Ctrl+K)</Fit></Locator>
        <SLabel $ml={538}><Fit w={106}>Coordinate</Fit></SLabel>
        <SIcon $ml={6}><Field><Fit w={182}>1538768, 1086081</Fit></Field></SIcon>
        <SIcon $ml={8}><Icon n="extent" size={32} /></SIcon>
        <SLabel $ml={27}><Fit w={51}>Scale</Fit></SLabel>
        <Combo $w={161} $ml={7}><SpinText><Fit w={92}>1:298670</Fit></SpinText><ComboArrow $line><Drop12 $s={17} $c="#666" /></ComboArrow></Combo>
        <SIcon $ml={20}><Icon n="lock" size={32} /></SIcon>
        <SLabel $ml={15}><Fit w={89}>Magnifier</Fit></SLabel>
        <Spin $w={166} $ml={7}><SpinText><Fit w={57}>100%</Fit></SpinText><SpinArrows /></Spin>
        <SLabel $ml={20}><Fit w={81}>Rotation</Fit></SLabel>
        <Spin $w={166} $ml={19}><SpinText><Fit w={47}>0.0 °</Fit></SpinText><SpinArrows /></Spin>
        <SIcon $ml={14}><Check $w={26}><Tick /></Check></SIcon>
        <SLabel $ml={10}><Fit w={70}>Render</Fit></SLabel>
        <SIcon $ml={31}><Icon n="globe" size={32} /></SIcon>
        <SLabel $ml={4}><Fit w={108}>EPSG:3116</Fit></SLabel>
        <SIcon $ml={45}><Icon n="bubble" size={34} /></SIcon>
      </Status>
    </Window>
  );
}
